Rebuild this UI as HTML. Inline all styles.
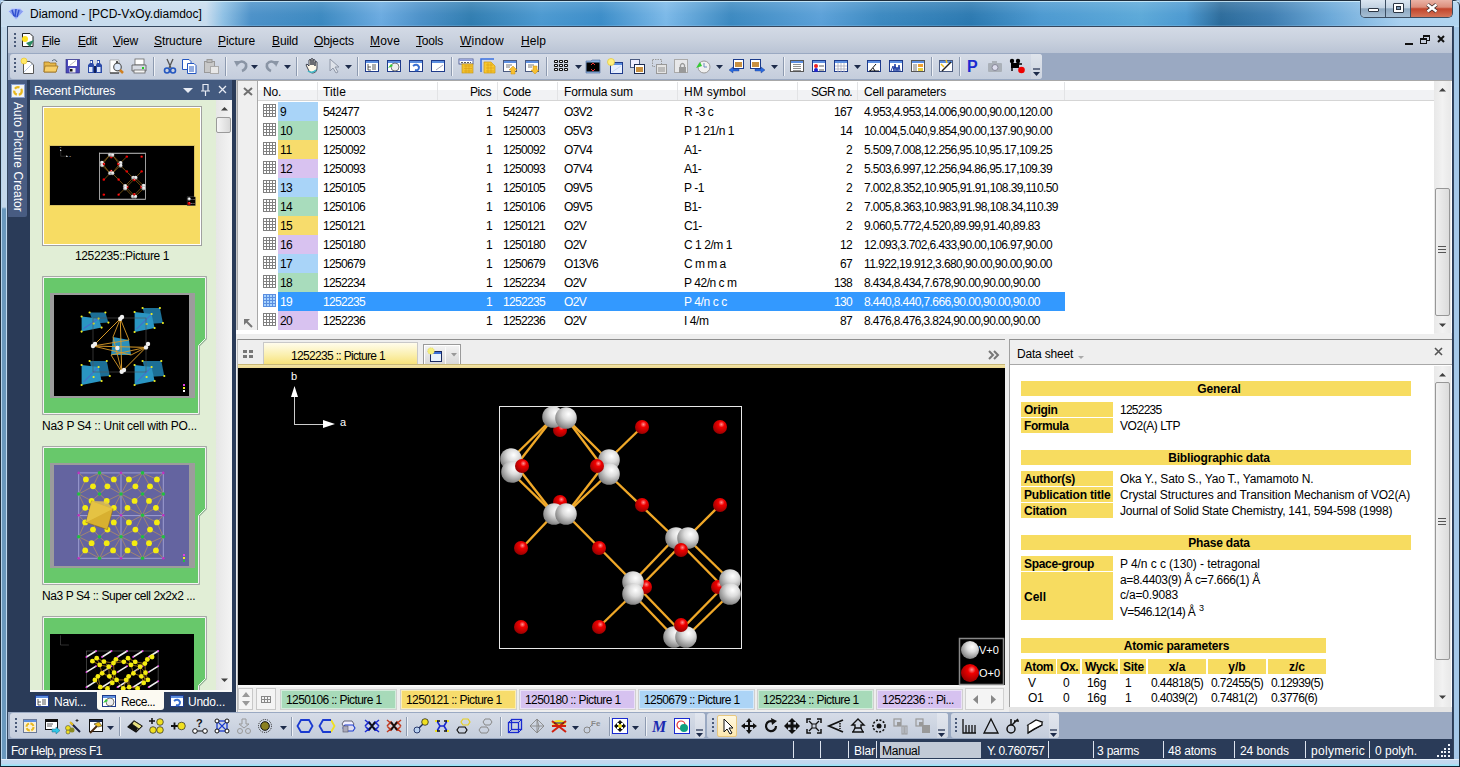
<!DOCTYPE html><html><head><meta charset="utf-8"><style>
*{box-sizing:border-box;margin:0;padding:0}
html,body{width:1460px;height:767px;overflow:hidden}
body{position:relative;font-family:"Liberation Sans", sans-serif;font-size:12px;color:#000;background:#a9c8e6}
.a{position:absolute}
.t{position:absolute;white-space:nowrap;line-height:1}
svg{overflow:visible}
</style></head><body>

<div class="a" style="left:0;top:0;width:1460px;height:767px;border:1px solid #1e2d3c;border-radius:6px 6px 0 0;
background:linear-gradient(90deg,#c8dcee 0px,#c8dcee 205px,#8ec0e4 222px,#4a90c8 250px,#3a88c0 320px,#6aaae0 380px,#4a90c8 420px,#2f7cb0 470px,#4a98d0 540px,#3a8cc8 600px,#7ab8e8 665px,#3a88c0 730px,#5aa0d8 820px,#3a88c0 880px,#2a78b0 970px,#4a98d0 1040px,#5aa8d8 1140px,#4a98d0 1185px,#2a6a9a 1220px,#3c7cb0 1270px,#6aa8d8 1330px,#a8d0f0 1400px,#b0d4f0 1460px)"></div>
<div class="a" style="left:1px;top:1px;width:1458px;height:26px;background:linear-gradient(180deg,rgba(220,245,255,.8) 0,rgba(220,245,255,.8) 1px,rgba(255,255,255,.15) 1px,rgba(255,255,255,.03) 50%,rgba(255,255,255,0) 92%,rgba(200,230,250,.6) 100%)"></div>
<div class="a" style="left:1px;top:27px;width:6px;height:733px;background:linear-gradient(180deg,#c4d8ea 0,#c4d8ea 180px,#6a98bd 182px,#6a98bd 100%);border-left:1px solid #b8d4ec;border-right:1px solid #c0d8f0"></div>
<div class="a" style="left:1453px;top:27px;width:6px;height:733px;background:#a5c8e8;border-left:1px solid #c8e0f8"></div>

<div class="t" style="left:30.0px;top:8px;font-size:12px;">Diamond - [PCD-VxOy.diamdoc]</div>
<svg class="a" style="left:8px;top:8px" width="16" height="12" viewBox="0 0 16 12"><path d="M0.5 3.5 L4 0.5 H12 L15.5 3.5 L8 11.5 Z" fill="#8aa0f0" stroke="#c8d4ff" stroke-width=".8"/><path d="M4 2L6 8M8 1L7 9M11 2L9 9" stroke="#3050d0" stroke-width="1.5" fill="none"/></svg>
<div class="a" style="left:1360px;top:0px;width:93px;height:18px;border:1px solid #3c4e62;border-top:none;border-radius:0 0 5px 5px;overflow:hidden;background:#9fb6cc">
<div class="a" style="left:0;top:0;width:25px;height:17px;background:linear-gradient(180deg,#dbe6f1 0,#c3d3e3 45%,#8ea8c0 52%,#a6bed4 100%);border-right:1px solid #3c4e62"></div>
<div class="a" style="left:25px;top:0;width:25px;height:17px;background:linear-gradient(180deg,#dbe6f1 0,#c3d3e3 45%,#8ea8c0 52%,#a6bed4 100%);border-right:1px solid #3c4e62"></div>
<div class="a" style="left:50px;top:0;width:42px;height:17px;background:linear-gradient(180deg,#eab3a6 0,#dc8e7c 42%,#c2452c 52%,#d4755a 100%)"></div>
<div class="a" style="left:7px;top:8px;width:11px;height:4px;background:#fff;border:1px solid #2a3442;border-radius:1px"></div>
<div class="a" style="left:32px;top:3px;width:11px;height:10px;border:1px solid #2a3442;background:#fff;border-radius:1px"></div>
<div class="a" style="left:35px;top:6px;width:5px;height:4px;background:#7d98b4;border:1px solid #2a3442"></div>
<svg class="a" style="left:65px;top:3px" width="12" height="10" viewBox="0 0 12 10"><path d="M1.5 1.5L10.5 8.5M10.5 1.5L1.5 8.5" stroke="#3a2a2a" stroke-width="4"/><path d="M1.5 1.5L10.5 8.5M10.5 1.5L1.5 8.5" stroke="#fff" stroke-width="2.4"/></svg>
</div>
<div class="a" style="left:7px;top:26px;width:1447px;height:734px;background:#2a3b58;border:1px solid #34465e;border-bottom:none"></div>
<div class="a" style="left:8px;top:27px;width:1444px;height:26px;background:linear-gradient(180deg,#d3dae6 0,#c9d1de 50%,#bac4d5 100%)"></div>
<div class="a" style="left:8px;top:53px;width:1444px;height:27px;background:#9aa9c2"></div>
<div class="a" style="left:10px;top:54px;width:1032px;height:25px;background:linear-gradient(180deg,#d6dce7,#c4cddc);border-radius:3px"></div>
<div class="a" style="left:1031px;top:54px;width:11px;height:25px;background:linear-gradient(180deg,#dfe4ec,#cdd4e0);border-radius:0 3px 3px 0"></div>
<div class="a" style="left:14px;top:33px;width:2px;height:2px;background:#4a5a78"></div><div class="a" style="left:14px;top:37px;width:2px;height:2px;background:#4a5a78"></div><div class="a" style="left:14px;top:41px;width:2px;height:2px;background:#4a5a78"></div><div class="a" style="left:14px;top:45px;width:2px;height:2px;background:#4a5a78"></div>
<svg class="a" style="left:20px;top:32px" width="16" height="16" viewBox="0 0 16 16"><path d="M2.5 1.5H10L13 4.5V14.5H2.5Z" fill="#fff" stroke="#222"/><circle cx="5" cy="7" r="3" fill="#ffe020"/><path d="M6 11L14 8L10 15Z" fill="#2a8a60"/></svg>
<div class="t" style="left:42.0px;top:35px;font-size:12px;letter-spacing:-0.33px;"><u style="text-underline-offset:1px">F</u>ile</div>
<div class="t" style="left:78.0px;top:35px;font-size:12px;letter-spacing:-0.42px;"><u style="text-underline-offset:1px">E</u>dit</div>
<div class="t" style="left:113.0px;top:35px;font-size:12px;letter-spacing:-0.20px;"><u style="text-underline-offset:1px">V</u>iew</div>
<div class="t" style="left:154.0px;top:35px;font-size:12px;letter-spacing:-0.08px;"><u style="text-underline-offset:1px">S</u>tructure</div>
<div class="t" style="left:218.0px;top:35px;font-size:12px;letter-spacing:-0.05px;"><u style="text-underline-offset:1px">P</u>icture</div>
<div class="t" style="left:272.0px;top:35px;font-size:12px;letter-spacing:-0.14px;"><u style="text-underline-offset:1px">B</u>uild</div>
<div class="t" style="left:314.0px;top:35px;font-size:12px;letter-spacing:-0.10px;"><u style="text-underline-offset:1px">O</u>bjects</div>
<div class="t" style="left:370.0px;top:35px;font-size:12px;letter-spacing:0.16px;"><u style="text-underline-offset:1px">M</u>ove</div>
<div class="t" style="left:416.0px;top:35px;font-size:12px;letter-spacing:-0.20px;"><u style="text-underline-offset:1px">T</u>ools</div>
<div class="t" style="left:460.0px;top:35px;font-size:12px;letter-spacing:0.22px;"><u style="text-underline-offset:1px">W</u>indow</div>
<div class="t" style="left:521.0px;top:35px;font-size:12px;letter-spacing:0.08px;"><u style="text-underline-offset:1px">H</u>elp</div>
<div class="a" style="left:1405px;top:43px;width:8px;height:2px;background:#111"></div>
<div class="a" style="left:1423px;top:35px;width:7px;height:6px;border:1px solid #111;border-top-width:2px"></div><div class="a" style="left:1420px;top:38px;width:7px;height:6px;border:1px solid #111;border-top-width:2px;background:#c6cedc"></div>
<svg class="a" style="left:1437px;top:35px" width="8" height="8" viewBox="0 0 8 8"><path d="M1 1L7 7M7 1L1 7" stroke="#111" stroke-width="2"/></svg>
<div class="a" style="left:14px;top:58px;width:2px;height:2px;background:#4a5a78"></div><div class="a" style="left:14px;top:62px;width:2px;height:2px;background:#4a5a78"></div><div class="a" style="left:14px;top:66px;width:2px;height:2px;background:#4a5a78"></div><div class="a" style="left:14px;top:70px;width:2px;height:2px;background:#4a5a78"></div>
<svg class="a" style="left:20px;top:58px" width="16" height="16" viewBox="0 0 16 16"><path d="M3.5 3.5H10L13.5 7V15.5H3.5Z" fill="#fff" stroke="#555"/><path d="M4 14L12 6" stroke="#b8c8e0"/><circle cx="4" cy="3" r="3" fill="#ffe866" stroke="#e8c020" stroke-width=".6"/></svg>
<svg class="a" style="left:43px;top:58px" width="16" height="16" viewBox="0 0 16 16"><path d="M1 4H6L7 5H13V14H1Z" fill="#e6b84a" stroke="#9a7020" stroke-width=".8"/><path d="M2 8H15L13 14H1Z" fill="#f7cf6a" stroke="#9a7020" stroke-width=".8"/><path d="M9 3Q12 0 14 4" stroke="#567" fill="none" stroke-width="1"/></svg>
<svg class="a" style="left:65px;top:58px" width="16" height="16" viewBox="0 0 16 16"><rect x="1" y="1.5" width="13.5" height="13.5" fill="#4a48b8" stroke="#2a2a80" stroke-width=".6"/><rect x="3" y="2" width="9" height="6" fill="#fff"/><path d="M4.5 7.5L11 2.5" stroke="#aaa" stroke-width=".8"/><rect x="4.5" y="10" width="6" height="4.5" fill="#eee"/><rect x="5" y="11" width="2.5" height="2.5" fill="#111"/></svg>
<svg class="a" style="left:87px;top:58px" width="16" height="16" viewBox="0 0 16 16"><path d="M3 2H6V5L7 7V15H1V7L3 5Z" fill="#2a4aa8"/><path d="M10 2H13V5L15 7V15H9V7L10 5Z" fill="#2a4aa8"/><rect x="2" y="9" width="3.5" height="5" fill="#dde6f8"/><rect x="10" y="9" width="3.5" height="5" fill="#dde6f8"/><rect x="3.5" y="3" width="1.5" height="2" fill="#fff"/><rect x="10.5" y="3" width="1.5" height="2" fill="#fff"/><rect x="7" y="8" width="2" height="7" fill="#10205a"/></svg>
<svg class="a" style="left:109px;top:58px" width="16" height="16" viewBox="0 0 16 16"><path d="M1 2H10V15H1Z" fill="#fff" stroke="#8a8a8a" stroke-width=".6"/><path d="M1 15H10" stroke="#333" stroke-width="1.2"/><circle cx="8.5" cy="9" r="3.8" fill="#dde8f8" stroke="#555" stroke-width="1.2"/><path d="M8 3V5" stroke="#222" stroke-width="1.5"/><path d="M11 12L14 15" stroke="#d08020" stroke-width="2.5"/></svg>
<svg class="a" style="left:131px;top:58px" width="16" height="16" viewBox="0 0 16 16"><rect x="4" y="1" width="9" height="6" fill="#fff" stroke="#666" stroke-width=".8"/><path d="M1 7H15V13H1Z" fill="#d8dce4" stroke="#555" stroke-width=".8"/><rect x="3" y="12" width="11" height="3" fill="#f4f4f4" stroke="#666" stroke-width=".8"/><rect x="11" y="9" width="2" height="2" fill="#2c2"/></svg>
<svg class="a" style="left:162px;top:58px" width="16" height="16" viewBox="0 0 16 16"><path d="M5 1L9 10M11 1L7 10" stroke="#555" stroke-width="1.3"/><circle cx="5" cy="12.5" r="2.5" fill="none" stroke="#2356c0" stroke-width="1.6"/><circle cx="11" cy="12.5" r="2.5" fill="none" stroke="#2356c0" stroke-width="1.6"/></svg>
<svg class="a" style="left:181px;top:58px" width="16" height="16" viewBox="0 0 16 16"><path d="M1.5 1.5H8L10 3.5V11.5H1.5Z" fill="#fff" stroke="#2356c0"/><path d="M6.5 5.5H13L15 7.5V15.5H6.5Z" fill="#fff" stroke="#2356c0"/><path d="M8 9H13M8 11H13M8 13H13" stroke="#2356c0"/></svg>
<svg class="a" style="left:203px;top:58px" width="16" height="16" viewBox="0 0 16 16"><rect x="1.5" y="3.5" width="10" height="11" fill="#c8c8c8" stroke="#999"/><rect x="4" y="1.5" width="5" height="3" fill="#bbb" stroke="#999"/><rect x="7.5" y="8.5" width="8" height="7" fill="#e8e8e8" stroke="#aaa"/></svg>
<svg class="a" style="left:233px;top:58px" width="16" height="16" viewBox="0 0 16 16"><path d="M4 6Q9 1 13 6Q14 11 9 13" stroke="#8a95a5" stroke-width="2.6" fill="none"/><path d="M1 3L6 3L4 9Z" fill="#8a95a5"/></svg>
<svg class="a" style="left:264px;top:58px" width="16" height="16" viewBox="0 0 16 16"><path d="M12 6Q7 1 3 6Q2 11 7 13" stroke="#8a95a5" stroke-width="2.6" fill="none"/><path d="M15 3L10 3L12 9Z" fill="#8a95a5"/></svg>
<svg class="a" style="left:304px;top:58px" width="16" height="16" viewBox="0 0 16 16"><path d="M3 9Q1 6 3 6L5 8V2Q6 1 7 2V7V1Q8 0 9 1V7V2Q10 1 11 2V8V4Q12 3 13 4V10Q13 15 8 15Q5 15 3 9Z" fill="#fff8e8" stroke="#2a3040" stroke-width=".9"/><path d="M4 13Q8 16 12 12" stroke="#3cb8c8" stroke-width="1.5" fill="none"/></svg>
<svg class="a" style="left:326px;top:58px" width="16" height="16" viewBox="0 0 16 16"><path d="M4 1V13L7 10L10 15L12 14L9 9H13Z" fill="#dfe3ea" stroke="#9098a8"/></svg>
<svg class="a" style="left:364px;top:58px" width="16" height="16" viewBox="0 0 16 16"><rect x="1.5" y="2.5" width="13" height="11" fill="#fff" stroke="#1e3a8a"/><rect x="2" y="3" width="12" height="2" fill="#5d8fe0"/><path d="M4 6V12H7M4 9H7M8 7H12M8 9H12M8 11H12" stroke="#333" stroke-width=".8" fill="none"/></svg>
<svg class="a" style="left:386px;top:58px" width="16" height="16" viewBox="0 0 16 16"><rect x="1.5" y="2.5" width="13" height="11" fill="#fff" stroke="#1e3a8a"/><rect x="2" y="3" width="12" height="2" fill="#5d8fe0"/><circle cx="9" cy="9" r="4" fill="#eee" stroke="#777"/><path d="M2 10L5 6L7 8Z" fill="#3c3"/></svg>
<svg class="a" style="left:408px;top:58px" width="16" height="16" viewBox="0 0 16 16"><rect x="1.5" y="2.5" width="13" height="11" fill="#fff" stroke="#1e3a8a"/><rect x="2" y="3" width="12" height="2" fill="#5d8fe0"/><path d="M5 8Q9 5 11 9Q11 13 7 12" stroke="#3a6fd0" stroke-width="2" fill="none"/></svg>
<svg class="a" style="left:430px;top:58px" width="16" height="16" viewBox="0 0 16 16"><rect x="1.5" y="2.5" width="13" height="11" fill="#fff" stroke="#1e3a8a"/><rect x="2" y="3" width="12" height="2" fill="#5d8fe0"/><path d="M6 12L13 7" stroke="#aab"/></svg>
<svg class="a" style="left:458px;top:58px" width="16" height="16" viewBox="0 0 16 16"><rect x="1" y="1" width="14" height="5" fill="#fff" stroke="#3a4a8a" stroke-width=".8"/><rect x="1.4" y="1.4" width="13.2" height="1.6" fill="#8a9ae0"/><path d="M3 4.5H13" stroke="#333" stroke-width=".8" stroke-dasharray="2 1"/><rect x="4" y="6" width="11" height="9" fill="#f2c232" stroke="#c09010" stroke-width=".6"/><path d="M6 8H14M6 10.5H14M6 13H14M8 7V15M11 7V15" stroke="#d8a010" stroke-width=".6"/></svg>
<svg class="a" style="left:480px;top:58px" width="16" height="16" viewBox="0 0 16 16"><path d="M1 14V1H14" stroke="#3a70e0" stroke-width="1.5" fill="none"/><path d="M4 4H11L15 8V15H4Z" fill="#f8c830" stroke="#d09a10" stroke-width=".7"/><path d="M6 7H13M6 10H14M6 13H14M8 5V15M11 5V15" stroke="#d8a010" stroke-width=".6"/></svg>
<svg class="a" style="left:502px;top:58px" width="16" height="16" viewBox="0 0 16 16"><rect x="1.5" y="2.5" width="13" height="11" fill="#fff" stroke="#4a5a80"/><rect x="2" y="3" width="12" height="2" fill="#5d8fe0"/><path d="M4 7H10M4 9H8" stroke="#555" stroke-width=".8"/><path d="M11 8L15 12H13V16H9V12H7Z" fill="#f8c030" stroke="#c89010" stroke-width=".5"/></svg>
<svg class="a" style="left:524px;top:58px" width="16" height="16" viewBox="0 0 16 16"><rect x="1.5" y="2.5" width="13" height="11" fill="#fff" stroke="#4a5a80"/><rect x="2" y="3" width="12" height="2" fill="#5d8fe0"/><path d="M4 7H10M4 9H8" stroke="#555" stroke-width=".8"/><path d="M11 16L15 12H13V8H9V12H7Z" fill="#f8c030" stroke="#c89010" stroke-width=".5"/></svg>
<svg class="a" style="left:553px;top:58px" width="16" height="16" viewBox="0 0 16 16"><rect x="1.5" y="2.5" width="3" height="2" rx=".5" fill="#fff" stroke="#111" stroke-width="1.1"/><rect x="1.5" y="6.5" width="3" height="2" rx=".5" fill="#fff" stroke="#111" stroke-width="1.1"/><rect x="1.5" y="10.5" width="3" height="2" rx=".5" fill="#fff" stroke="#111" stroke-width="1.1"/><rect x="6.5" y="2.5" width="3" height="2" rx=".5" fill="#fff" stroke="#111" stroke-width="1.1"/><rect x="6.5" y="6.5" width="3" height="2" rx=".5" fill="#fff" stroke="#111" stroke-width="1.1"/><rect x="6.5" y="10.5" width="3" height="2" rx=".5" fill="#fff" stroke="#111" stroke-width="1.1"/><rect x="11.5" y="2.5" width="3" height="2" rx=".5" fill="#fff" stroke="#111" stroke-width="1.1"/><rect x="11.5" y="6.5" width="3" height="2" rx=".5" fill="#fff" stroke="#111" stroke-width="1.1"/><rect x="11.5" y="10.5" width="3" height="2" rx=".5" fill="#fff" stroke="#111" stroke-width="1.1"/></svg>
<svg class="a" style="left:585px;top:58px" width="16" height="16" viewBox="0 0 16 16"><path d="M1 3H6L7 2H15V15H1Z" fill="#8ab0e0" stroke="#4a6a9a" stroke-width=".6"/><rect x="1.5" y="4.5" width="13" height="9" fill="#000"/><path d="M6 7L8 5L10 7M6 11L8 13L10 11" stroke="#e33" fill="none"/></svg>
<svg class="a" style="left:607px;top:58px" width="16" height="16" viewBox="0 0 16 16"><rect x="3.5" y="4.5" width="12" height="11" fill="#e8f0ff" stroke="#1e3a8a"/><rect x="4" y="5" width="11" height="2" fill="#5d8fe0"/><path d="M5 14L14 8" stroke="#c8d8f0"/><circle cx="4" cy="4" r="3.5" fill="#fff080" stroke="#e0c020" stroke-width=".6"/></svg>
<svg class="a" style="left:629px;top:58px" width="16" height="16" viewBox="0 0 16 16"><rect x="1.5" y="1.5" width="9" height="8" fill="#eef" stroke="#4a5a80"/><rect x="5.5" y="6.5" width="10" height="9" fill="#fff" stroke="#1a2a50"/><rect x="7" y="9" width="7" height="5" fill="#c89040"/></svg>
<svg class="a" style="left:651px;top:58px" width="16" height="16" viewBox="0 0 16 16"><rect x="1.5" y="1.5" width="9" height="7" fill="none" stroke="#999" stroke-dasharray="1.5 1"/><rect x="5.5" y="6.5" width="10" height="9" fill="#e4e4e4" stroke="#999"/><rect x="7" y="9" width="7" height="5" fill="#bbb"/></svg>
<svg class="a" style="left:673px;top:58px" width="16" height="16" viewBox="0 0 16 16"><rect x="1.5" y="1.5" width="13" height="13" fill="#e8e8ea" stroke="#aaa"/><rect x="6" y="9" width="7" height="6" fill="#999"/><path d="M7.5 9V7Q9.5 4 11.5 7V9" stroke="#999" stroke-width="1.3" fill="none"/></svg>
<svg class="a" style="left:695px;top:58px" width="16" height="16" viewBox="0 0 16 16"><circle cx="9" cy="9" r="6" fill="#f0f0f0" stroke="#999"/><path d="M9 5V9H12" stroke="#6a8ac0" fill="none"/><path d="M1 10L5 4L7 8Z" fill="#3c3"/></svg>
<svg class="a" style="left:728px;top:58px" width="16" height="16" viewBox="0 0 16 16"><rect x="5.5" y="1.5" width="10" height="9" fill="#fff" stroke="#1a3a8a"/><rect x="7" y="4" width="7" height="5" fill="#c89040"/><path d="M1 12L5 9V11H11V13H5V15Z" fill="#2a6ae0" stroke="#1a3a8a" stroke-width=".4"/></svg>
<svg class="a" style="left:750px;top:58px" width="16" height="16" viewBox="0 0 16 16"><rect x="0.5" y="1.5" width="10" height="9" fill="#fff" stroke="#1a3a8a"/><rect x="2" y="4" width="7" height="5" fill="#c89040"/><path d="M15 12L11 9V11H5V13H11V15Z" fill="#2a6ae0" stroke="#1a3a8a" stroke-width=".4"/></svg>
<svg class="a" style="left:789px;top:58px" width="16" height="16" viewBox="0 0 16 16"><rect x="1.5" y="2.5" width="13" height="11" fill="#fff" stroke="#555"/><rect x="2" y="3" width="12" height="2" fill="#5d8fe0"/><path d="M4 6.5H12M4 8.5H12M4 10.5H12M4 12.5H12" stroke="#444" stroke-width=".6"/></svg>
<svg class="a" style="left:811px;top:58px" width="16" height="16" viewBox="0 0 16 16"><rect x="1.5" y="2.5" width="13" height="11" fill="#fff" stroke="#1e3a8a"/><rect x="2" y="3" width="12" height="2" fill="#5d8fe0"/><circle cx="5" cy="8" r="2" fill="#e22"/><circle cx="5" cy="12" r="2" fill="#22c"/><path d="M8 8H13M8 12H13" stroke="#333" stroke-width=".8"/></svg>
<svg class="a" style="left:833px;top:58px" width="16" height="16" viewBox="0 0 16 16"><rect x="1.5" y="2.5" width="13" height="11" fill="#fff" stroke="#1e3a8a"/><rect x="2" y="3" width="12" height="2" fill="#5d8fe0"/><path d="M2 8H14M2 11H14M5 5V14M8 5V14M11 5V14" stroke="#aab" stroke-width=".8"/></svg>
<svg class="a" style="left:866px;top:58px" width="16" height="16" viewBox="0 0 16 16"><rect x="1.5" y="2.5" width="13" height="11" fill="#fff" stroke="#1e3a8a"/><rect x="2" y="3" width="12" height="2" fill="#5d8fe0"/><path d="M3 13H13M4 13L10 6M7 10L9 13" stroke="#111" fill="none"/></svg>
<svg class="a" style="left:888px;top:58px" width="16" height="16" viewBox="0 0 16 16"><rect x="1.5" y="2.5" width="13" height="11" fill="#fff" stroke="#1e3a8a"/><rect x="2" y="3" width="12" height="2" fill="#5d8fe0"/><path d="M3 13L5 8L6 13L7 6L8 13L9 9L10 13L11 7L12 13" stroke="#1a3aa0" fill="none"/></svg>
<svg class="a" style="left:910px;top:58px" width="16" height="16" viewBox="0 0 16 16"><rect x="1.5" y="2.5" width="13" height="11" fill="#fff" stroke="#555"/><rect x="2" y="3" width="12" height="2" fill="#5d8fe0"/><rect x="3" y="6" width="4" height="7" fill="#bbb"/><rect x="8" y="6" width="5" height="3" fill="#f0a030"/><rect x="8" y="10" width="5" height="3" fill="#e8d040"/></svg>
<svg class="a" style="left:938px;top:58px" width="16" height="16" viewBox="0 0 16 16"><rect x="1.5" y="2.5" width="13" height="11" fill="#fff" stroke="#4a5a80"/><rect x="2" y="3" width="12" height="2" fill="#5d8fe0"/><path d="M4 13L13 4" stroke="#222" stroke-width="1.5"/><path d="M3 6L6 9M8 2L9 5" stroke="#f0c020" stroke-width="1.5"/></svg>
<svg class="a" style="left:965px;top:58px" width="16" height="16" viewBox="0 0 16 16"><text x="2" y="14" font-family="Liberation Sans" font-weight="bold" font-size="16" fill="#1a2ad0">P</text></svg>
<svg class="a" style="left:987px;top:58px" width="16" height="16" viewBox="0 0 16 16"><rect x="1" y="5" width="14" height="9" rx="1" fill="#aab0b8"/><circle cx="8" cy="9.5" r="3" fill="#dde" stroke="#889"/><rect x="5" y="3" width="5" height="2" fill="#aab0b8"/></svg>
<svg class="a" style="left:1009px;top:58px" width="16" height="16" viewBox="0 0 16 16"><circle cx="3" cy="3" r="2.2" fill="#000"/><circle cx="9" cy="3" r="2.2" fill="#000"/><rect x="2" y="5" width="8" height="5" fill="#000"/><path d="M10 6H13M3 10V13" stroke="#000" stroke-width="1.5"/><circle cx="12.5" cy="12" r="3.3" fill="#e00"/></svg>
<div class="a" style="left:153px;top:57px;width:2px;height:19px;border-left:1px solid #8d9ab0;border-right:1px solid #eef1f6"></div>
<div class="a" style="left:225px;top:57px;width:2px;height:19px;border-left:1px solid #8d9ab0;border-right:1px solid #eef1f6"></div>
<div class="a" style="left:296px;top:57px;width:2px;height:19px;border-left:1px solid #8d9ab0;border-right:1px solid #eef1f6"></div>
<div class="a" style="left:357px;top:57px;width:2px;height:19px;border-left:1px solid #8d9ab0;border-right:1px solid #eef1f6"></div>
<div class="a" style="left:451px;top:57px;width:2px;height:19px;border-left:1px solid #8d9ab0;border-right:1px solid #eef1f6"></div>
<div class="a" style="left:546px;top:57px;width:2px;height:19px;border-left:1px solid #8d9ab0;border-right:1px solid #eef1f6"></div>
<div class="a" style="left:783px;top:57px;width:2px;height:19px;border-left:1px solid #8d9ab0;border-right:1px solid #eef1f6"></div>
<div class="a" style="left:931px;top:57px;width:2px;height:19px;border-left:1px solid #8d9ab0;border-right:1px solid #eef1f6"></div>
<div class="a" style="left:959px;top:57px;width:2px;height:19px;border-left:1px solid #8d9ab0;border-right:1px solid #eef1f6"></div>
<svg class="a" style="left:251px;top:65px" width="7" height="4" viewBox="0 0 7 4"><path d="M0 0H7L3.5 4Z" fill="#1d2b4a"/></svg>
<svg class="a" style="left:284px;top:65px" width="7" height="4" viewBox="0 0 7 4"><path d="M0 0H7L3.5 4Z" fill="#1d2b4a"/></svg>
<svg class="a" style="left:345px;top:65px" width="7" height="4" viewBox="0 0 7 4"><path d="M0 0H7L3.5 4Z" fill="#1d2b4a"/></svg>
<svg class="a" style="left:575px;top:65px" width="7" height="4" viewBox="0 0 7 4"><path d="M0 0H7L3.5 4Z" fill="#1d2b4a"/></svg>
<svg class="a" style="left:716px;top:65px" width="7" height="4" viewBox="0 0 7 4"><path d="M0 0H7L3.5 4Z" fill="#1d2b4a"/></svg>
<svg class="a" style="left:771px;top:65px" width="7" height="4" viewBox="0 0 7 4"><path d="M0 0H7L3.5 4Z" fill="#1d2b4a"/></svg>
<svg class="a" style="left:854px;top:65px" width="7" height="4" viewBox="0 0 7 4"><path d="M0 0H7L3.5 4Z" fill="#1d2b4a"/></svg>
<svg class="a" style="left:1032px;top:68px" width="9" height="9" viewBox="0 0 9 9"><path d="M1 1H8" stroke="#1d2b4a" stroke-width="1.2"/><path d="M1 4H8L4.5 8Z" fill="#1d2b4a"/></svg>
<div class="a" style="left:8px;top:80px;width:19px;height:137px;background:#485c82;border-radius:0 0 2px 0"></div>
<svg class="a" style="left:11px;top:84px" width="14" height="14" viewBox="0 0 14 14"><rect x="0.5" y="0.5" width="13" height="13" fill="#f4f4f0" stroke="#8aa0d0"/><circle cx="7" cy="7" r="3.8" fill="none" stroke="#e8b820" stroke-width="2.2" stroke-dasharray="5 2"/></svg>
<div class="t" style="left:12px;top:102px;font-size:12px;color:#fff;transform-origin:0 0;transform:translate(12px,0) rotate(90deg);letter-spacing:0.06px">Auto Picture Creator</div>
<div class="a" style="left:30px;top:80px;width:202px;height:20px;background:#435a7f"></div>
<div class="t" style="left:34.0px;top:85px;font-size:12px;color:#fff;letter-spacing:-0.25px;">Recent Pictures</div>
<svg class="a" style="left:183px;top:88px" width="10" height="5" viewBox="0 0 10 5"><path d="M0 0H10L5 5Z" fill="#e8ecf4"/></svg>
<svg class="a" style="left:201px;top:84px" width="10" height="12" viewBox="0 0 10 12"><path d="M2 0.5H7V7H2ZM0 7H9M4.5 7V12" stroke="#e8ecf4" stroke-width="1.2" fill="none"/></svg>
<svg class="a" style="left:218px;top:85px" width="9" height="9" viewBox="0 0 9 9"><path d="M1 1L8 8M8 1L1 8" stroke="#e8ecf4" stroke-width="1.3"/></svg>
<div class="a" style="left:30px;top:100px;width:186px;height:590px;background:#e1eed6"></div>
<div class="a" style="left:216px;top:100px;width:16px;height:590px;background:linear-gradient(90deg,#e6e6e6,#f4f4f4)"></div>
<svg class="a" style="left:220px;top:106px" width="9" height="5" viewBox="0 0 9 5"><path d="M1 4.5L4.5 1L8 4.5Z" fill="#404040"/></svg>
<div class="a" style="left:216px;top:117px;width:15px;height:16px;border:1px solid #9a9a9a;border-radius:2px;background:linear-gradient(90deg,#f6f6f6,#d8d8d8)"></div>
<svg class="a" style="left:220px;top:678px" width="9" height="5" viewBox="0 0 9 5"><path d="M1 0.5L4.5 4L8 0.5Z" fill="#404040"/></svg>
<div class="a" style="left:42px;top:106px;width:160px;height:140px;border:1px solid #a0a0a0;background:#f7dc63;box-shadow:inset 0 0 0 1px #fff"></div>
<div class="a" style="left:49px;top:145px;width:146px;height:61px;background:#000;border:1px solid #d8c060"></div>
<svg class="a" style="left:42px;top:276px" width="166" height="140" viewBox="0 0 166 140"><path d="M0.5 0.5H164.5V63L157.5 70V138.5H0.5Z" fill="#68c86b" stroke="#a8a8a8"/><path d="M1.5 1.5H163.5V62.5L156.5 69.5V137.5H1.5Z" fill="none" stroke="#f4f4f4"/></svg>
<div class="a" style="left:50px;top:293px;width:145px;height:105px;background:#9c9c9c"></div><div class="a" style="left:54px;top:295px;width:135px;height:101px;background:#000"></div>
<svg class="a" style="left:53px;top:294px" width="136" height="102" viewBox="0 0 136 102"><polygon points="36.6,18.5 52.4,18.5 55.4,28.6 40.6,29.6" fill="#1c6f96"/><polygon points="28.6,22.5 45.6,24.5 48.6,33.6 28.6,37.6" fill="#2a95c2"/><line x1="30.599999999999994" y1="34.60000000000002" x2="45.599999999999994" y2="24.5" stroke="#5060d0" stroke-width="1"/><circle cx="28.6" cy="22.5" r="1.1" fill="#f0f020"/><circle cx="36.6" cy="18.5" r="1.1" fill="#f0f020"/><circle cx="52.4" cy="18.5" r="1.1" fill="#f0f020"/><circle cx="45.6" cy="24.5" r="1.1" fill="#f0f020"/><circle cx="28.6" cy="37.6" r="1.1" fill="#f0f020"/><circle cx="48.6" cy="33.6" r="1.1" fill="#f0f020"/><circle cx="55.4" cy="28.6" r="1.1" fill="#f0f020"/><circle cx="40.6" cy="29.6" r="1.1" fill="#f0f020"/><polygon points="89.6,14.0 106.9,14.0 109.9,29.0 93.6,30.0" fill="#1c6f96"/><polygon points="81.6,18.0 98.6,20.0 101.6,34.0 81.6,38.0" fill="#2a95c2"/><line x1="83.6" y1="35" x2="98.6" y2="20" stroke="#5060d0" stroke-width="1"/><circle cx="81.6" cy="18.0" r="1.1" fill="#f0f020"/><circle cx="89.6" cy="14.0" r="1.1" fill="#f0f020"/><circle cx="106.9" cy="14.0" r="1.1" fill="#f0f020"/><circle cx="98.6" cy="20.0" r="1.1" fill="#f0f020"/><circle cx="81.6" cy="38.0" r="1.1" fill="#f0f020"/><circle cx="101.6" cy="34.0" r="1.1" fill="#f0f020"/><circle cx="109.9" cy="29.0" r="1.1" fill="#f0f020"/><circle cx="93.6" cy="30.0" r="1.1" fill="#f0f020"/><polygon points="36.6,67.0 53.8,67.0 56.8,82.0 40.6,83.0" fill="#1c6f96"/><polygon points="28.6,71.0 45.6,73.0 48.6,87.0 28.6,91.0" fill="#2a95c2"/><line x1="30.599999999999994" y1="88" x2="45.599999999999994" y2="73" stroke="#5060d0" stroke-width="1"/><circle cx="28.6" cy="71.0" r="1.1" fill="#f0f020"/><circle cx="36.6" cy="67.0" r="1.1" fill="#f0f020"/><circle cx="53.8" cy="67.0" r="1.1" fill="#f0f020"/><circle cx="45.6" cy="73.0" r="1.1" fill="#f0f020"/><circle cx="28.6" cy="91.0" r="1.1" fill="#f0f020"/><circle cx="48.6" cy="87.0" r="1.1" fill="#f0f020"/><circle cx="56.8" cy="82.0" r="1.1" fill="#f0f020"/><circle cx="40.6" cy="83.0" r="1.1" fill="#f0f020"/><polygon points="89.6,67.0 108.3,67.0 111.3,82.0 93.6,83.0" fill="#1c6f96"/><polygon points="81.6,71.0 98.6,73.0 101.6,87.0 81.6,91.0" fill="#2a95c2"/><line x1="83.6" y1="88" x2="98.6" y2="73" stroke="#5060d0" stroke-width="1"/><circle cx="81.6" cy="71.0" r="1.1" fill="#f0f020"/><circle cx="89.6" cy="67.0" r="1.1" fill="#f0f020"/><circle cx="108.3" cy="67.0" r="1.1" fill="#f0f020"/><circle cx="98.6" cy="73.0" r="1.1" fill="#f0f020"/><circle cx="81.6" cy="91.0" r="1.1" fill="#f0f020"/><circle cx="101.6" cy="87.0" r="1.1" fill="#f0f020"/><circle cx="111.3" cy="82.0" r="1.1" fill="#f0f020"/><circle cx="93.6" cy="83.0" r="1.1" fill="#f0f020"/><polygon points="60.0,43.0 76.0,46.0 78.0,61.0 58.0,61.0" fill="#2a90bc"/><line x1="67.3" y1="24.69999999999999" x2="40" y2="52" stroke="#d89a28" stroke-width="1"/><line x1="40" y1="52" x2="93" y2="53.39999999999998" stroke="#d89a28" stroke-width="1"/><line x1="93" y1="53.39999999999998" x2="68.7" y2="77.80000000000001" stroke="#d89a28" stroke-width="1"/><line x1="68.7" y1="77.80000000000001" x2="67.3" y2="24.69999999999999" stroke="#d89a28" stroke-width="1"/><line x1="67.3" y1="24.69999999999999" x2="60" y2="43" stroke="#d89a28" stroke-width=".9"/><line x1="67.3" y1="24.69999999999999" x2="76" y2="46" stroke="#d89a28" stroke-width=".9"/><line x1="40" y1="52" x2="76" y2="46" stroke="#d89a28" stroke-width=".9"/><line x1="40" y1="52" x2="78" y2="61" stroke="#d89a28" stroke-width=".9"/><line x1="93" y1="53.39999999999998" x2="78" y2="61" stroke="#d89a28" stroke-width=".9"/><line x1="93" y1="53.39999999999998" x2="58" y2="61" stroke="#d89a28" stroke-width=".9"/><line x1="68.7" y1="77.80000000000001" x2="58" y2="61" stroke="#d89a28" stroke-width=".9"/><line x1="68.7" y1="77.80000000000001" x2="60" y2="43" stroke="#d89a28" stroke-width=".9"/><rect x="40" y="24" width="53" height="54" fill="none" stroke="#555" stroke-width=".6"/><circle cx="67.3" cy="24.69999999999999" r="2.2" fill="#f0f0f0"/><circle cx="40" cy="52" r="2.2" fill="#f0f0f0"/><circle cx="93" cy="53.39999999999998" r="2.2" fill="#f0f0f0"/><circle cx="68.7" cy="77.80000000000001" r="2.2" fill="#f0f0f0"/><circle cx="64.4" cy="54" r="2.2" fill="#f0f0f0"/><circle cx="69" cy="23" r="2.2" fill="#f0f0f0"/><circle cx="42" cy="50" r="2.2" fill="#f0f0f0"/><circle cx="95" cy="50" r="2.2" fill="#f0f0f0"/><circle cx="71" cy="76" r="2.2" fill="#f0f0f0"/><rect x="130" y="90" width="2" height="2" fill="#e040e0"/><rect x="130" y="93" width="2" height="2" fill="#f0f020"/><rect x="130" y="96" width="2" height="2" fill="#fff"/></svg>
<svg class="a" style="left:42px;top:446px" width="166" height="140" viewBox="0 0 166 140"><path d="M0.5 0.5H164.5V63L157.5 70V138.5H0.5Z" fill="#68c86b" stroke="#a8a8a8"/><path d="M1.5 1.5H163.5V62.5L156.5 69.5V137.5H1.5Z" fill="none" stroke="#f4f4f4"/></svg>
<div class="a" style="left:50px;top:463px;width:145px;height:105px;background:#9c9c9c"></div><div class="a" style="left:54px;top:465px;width:135px;height:101px;background:#6464a0"></div>
<svg class="a" style="left:53px;top:464px" width="136" height="102" viewBox="0 0 136 102"><line x1="46.5" y1="8.9" x2="32.9" y2="15.4" stroke="#c89a50" stroke-width=".6"/><line x1="46.5" y1="8.9" x2="60.8" y2="15.4" stroke="#c89a50" stroke-width=".6"/><line x1="46.5" y1="8.9" x2="40.0" y2="22.3" stroke="#c89a50" stroke-width=".6"/><line x1="46.5" y1="8.9" x2="54.4" y2="22.3" stroke="#c89a50" stroke-width=".6"/><line x1="89.5" y1="8.9" x2="75.9" y2="15.4" stroke="#c89a50" stroke-width=".6"/><line x1="89.5" y1="8.9" x2="103.9" y2="15.4" stroke="#c89a50" stroke-width=".6"/><line x1="89.5" y1="8.9" x2="82.4" y2="22.3" stroke="#c89a50" stroke-width=".6"/><line x1="89.5" y1="8.9" x2="97.0" y2="22.3" stroke="#c89a50" stroke-width=".6"/><line x1="25.7" y1="30.0" x2="32.9" y2="15.4" stroke="#c89a50" stroke-width=".6"/><line x1="25.7" y1="30.0" x2="40.0" y2="22.3" stroke="#c89a50" stroke-width=".6"/><line x1="25.7" y1="30.0" x2="38.6" y2="36.9" stroke="#c89a50" stroke-width=".6"/><line x1="25.7" y1="30.0" x2="32.2" y2="43.8" stroke="#c89a50" stroke-width=".6"/><line x1="46.5" y1="30.0" x2="40.0" y2="22.3" stroke="#c89a50" stroke-width=".6"/><line x1="46.5" y1="30.0" x2="54.4" y2="22.3" stroke="#c89a50" stroke-width=".6"/><line x1="46.5" y1="30.0" x2="38.6" y2="36.9" stroke="#c89a50" stroke-width=".6"/><line x1="46.5" y1="30.0" x2="53.7" y2="36.9" stroke="#c89a50" stroke-width=".6"/><line x1="68.0" y1="30.0" x2="60.8" y2="15.4" stroke="#c89a50" stroke-width=".6"/><line x1="68.0" y1="30.0" x2="75.9" y2="15.4" stroke="#c89a50" stroke-width=".6"/><line x1="68.0" y1="30.0" x2="54.4" y2="22.3" stroke="#c89a50" stroke-width=".6"/><line x1="68.0" y1="30.0" x2="82.4" y2="22.3" stroke="#c89a50" stroke-width=".6"/><line x1="68.0" y1="30.0" x2="53.7" y2="36.9" stroke="#c89a50" stroke-width=".6"/><line x1="68.0" y1="30.0" x2="81.6" y2="36.9" stroke="#c89a50" stroke-width=".6"/><line x1="68.0" y1="30.0" x2="60.8" y2="43.8" stroke="#c89a50" stroke-width=".6"/><line x1="68.0" y1="30.0" x2="74.5" y2="43.8" stroke="#c89a50" stroke-width=".6"/><line x1="89.5" y1="30.0" x2="82.4" y2="22.3" stroke="#c89a50" stroke-width=".6"/><line x1="89.5" y1="30.0" x2="97.0" y2="22.3" stroke="#c89a50" stroke-width=".6"/><line x1="89.5" y1="30.0" x2="81.6" y2="36.9" stroke="#c89a50" stroke-width=".6"/><line x1="89.5" y1="30.0" x2="96.0" y2="36.9" stroke="#c89a50" stroke-width=".6"/><line x1="110.3" y1="30.0" x2="103.9" y2="15.4" stroke="#c89a50" stroke-width=".6"/><line x1="110.3" y1="30.0" x2="97.0" y2="22.3" stroke="#c89a50" stroke-width=".6"/><line x1="110.3" y1="30.0" x2="96.0" y2="36.9" stroke="#c89a50" stroke-width=".6"/><line x1="110.3" y1="30.0" x2="102.9" y2="43.8" stroke="#c89a50" stroke-width=".6"/><line x1="46.5" y1="51.2" x2="38.6" y2="36.9" stroke="#c89a50" stroke-width=".6"/><line x1="46.5" y1="51.2" x2="53.7" y2="36.9" stroke="#c89a50" stroke-width=".6"/><line x1="46.5" y1="51.2" x2="32.2" y2="43.8" stroke="#c89a50" stroke-width=".6"/><line x1="46.5" y1="51.2" x2="60.8" y2="43.8" stroke="#c89a50" stroke-width=".6"/><line x1="46.5" y1="51.2" x2="32.2" y2="58.4" stroke="#c89a50" stroke-width=".6"/><line x1="46.5" y1="51.2" x2="60.8" y2="58.4" stroke="#c89a50" stroke-width=".6"/><line x1="46.5" y1="51.2" x2="40.0" y2="65.6" stroke="#c89a50" stroke-width=".6"/><line x1="46.5" y1="51.2" x2="54.4" y2="65.6" stroke="#c89a50" stroke-width=".6"/><line x1="89.5" y1="51.2" x2="81.6" y2="36.9" stroke="#c89a50" stroke-width=".6"/><line x1="89.5" y1="51.2" x2="96.0" y2="36.9" stroke="#c89a50" stroke-width=".6"/><line x1="89.5" y1="51.2" x2="74.5" y2="43.8" stroke="#c89a50" stroke-width=".6"/><line x1="89.5" y1="51.2" x2="102.9" y2="43.8" stroke="#c89a50" stroke-width=".6"/><line x1="89.5" y1="51.2" x2="75.9" y2="58.4" stroke="#c89a50" stroke-width=".6"/><line x1="89.5" y1="51.2" x2="103.9" y2="58.4" stroke="#c89a50" stroke-width=".6"/><line x1="89.5" y1="51.2" x2="82.4" y2="65.6" stroke="#c89a50" stroke-width=".6"/><line x1="89.5" y1="51.2" x2="97.0" y2="65.6" stroke="#c89a50" stroke-width=".6"/><line x1="25.7" y1="72.8" x2="32.2" y2="58.4" stroke="#c89a50" stroke-width=".6"/><line x1="25.7" y1="72.8" x2="40.0" y2="65.6" stroke="#c89a50" stroke-width=".6"/><line x1="25.7" y1="72.8" x2="38.6" y2="79.2" stroke="#c89a50" stroke-width=".6"/><line x1="25.7" y1="72.8" x2="32.2" y2="86.4" stroke="#c89a50" stroke-width=".6"/><line x1="46.5" y1="72.8" x2="40.0" y2="65.6" stroke="#c89a50" stroke-width=".6"/><line x1="46.5" y1="72.8" x2="54.4" y2="65.6" stroke="#c89a50" stroke-width=".6"/><line x1="46.5" y1="72.8" x2="38.6" y2="79.2" stroke="#c89a50" stroke-width=".6"/><line x1="46.5" y1="72.8" x2="53.7" y2="79.2" stroke="#c89a50" stroke-width=".6"/><line x1="68.0" y1="72.8" x2="60.8" y2="58.4" stroke="#c89a50" stroke-width=".6"/><line x1="68.0" y1="72.8" x2="75.9" y2="58.4" stroke="#c89a50" stroke-width=".6"/><line x1="68.0" y1="72.8" x2="54.4" y2="65.6" stroke="#c89a50" stroke-width=".6"/><line x1="68.0" y1="72.8" x2="82.4" y2="65.6" stroke="#c89a50" stroke-width=".6"/><line x1="68.0" y1="72.8" x2="53.7" y2="79.2" stroke="#c89a50" stroke-width=".6"/><line x1="68.0" y1="72.8" x2="81.6" y2="79.2" stroke="#c89a50" stroke-width=".6"/><line x1="68.0" y1="72.8" x2="60.1" y2="86.4" stroke="#c89a50" stroke-width=".6"/><line x1="68.0" y1="72.8" x2="74.5" y2="86.4" stroke="#c89a50" stroke-width=".6"/><line x1="89.5" y1="72.8" x2="82.4" y2="65.6" stroke="#c89a50" stroke-width=".6"/><line x1="89.5" y1="72.8" x2="97.0" y2="65.6" stroke="#c89a50" stroke-width=".6"/><line x1="89.5" y1="72.8" x2="81.6" y2="79.2" stroke="#c89a50" stroke-width=".6"/><line x1="89.5" y1="72.8" x2="96.0" y2="79.2" stroke="#c89a50" stroke-width=".6"/><line x1="110.3" y1="72.8" x2="103.9" y2="58.4" stroke="#c89a50" stroke-width=".6"/><line x1="110.3" y1="72.8" x2="97.0" y2="65.6" stroke="#c89a50" stroke-width=".6"/><line x1="110.3" y1="72.8" x2="96.0" y2="79.2" stroke="#c89a50" stroke-width=".6"/><line x1="110.3" y1="72.8" x2="102.9" y2="86.4" stroke="#c89a50" stroke-width=".6"/><line x1="46.5" y1="94.3" x2="38.6" y2="79.2" stroke="#c89a50" stroke-width=".6"/><line x1="46.5" y1="94.3" x2="53.7" y2="79.2" stroke="#c89a50" stroke-width=".6"/><line x1="46.5" y1="94.3" x2="32.2" y2="86.4" stroke="#c89a50" stroke-width=".6"/><line x1="46.5" y1="94.3" x2="60.1" y2="86.4" stroke="#c89a50" stroke-width=".6"/><line x1="89.5" y1="94.3" x2="81.6" y2="79.2" stroke="#c89a50" stroke-width=".6"/><line x1="89.5" y1="94.3" x2="96.0" y2="79.2" stroke="#c89a50" stroke-width=".6"/><line x1="89.5" y1="94.3" x2="74.5" y2="86.4" stroke="#c89a50" stroke-width=".6"/><line x1="89.5" y1="94.3" x2="102.9" y2="86.4" stroke="#c89a50" stroke-width=".6"/><line x1="25.7" y1="8.9" x2="32.9" y2="15.4" stroke="#c89a50" stroke-width=".6"/><line x1="68.0" y1="8.9" x2="60.8" y2="15.4" stroke="#c89a50" stroke-width=".6"/><line x1="68.0" y1="8.9" x2="75.9" y2="15.4" stroke="#c89a50" stroke-width=".6"/><line x1="110.3" y1="8.9" x2="103.9" y2="15.4" stroke="#c89a50" stroke-width=".6"/><line x1="25.7" y1="51.2" x2="32.2" y2="43.8" stroke="#c89a50" stroke-width=".6"/><line x1="25.7" y1="51.2" x2="32.2" y2="58.4" stroke="#c89a50" stroke-width=".6"/><line x1="68.0" y1="51.2" x2="60.8" y2="43.8" stroke="#c89a50" stroke-width=".6"/><line x1="68.0" y1="51.2" x2="74.5" y2="43.8" stroke="#c89a50" stroke-width=".6"/><line x1="68.0" y1="51.2" x2="60.8" y2="58.4" stroke="#c89a50" stroke-width=".6"/><line x1="68.0" y1="51.2" x2="75.9" y2="58.4" stroke="#c89a50" stroke-width=".6"/><line x1="110.3" y1="51.2" x2="102.9" y2="43.8" stroke="#c89a50" stroke-width=".6"/><line x1="110.3" y1="51.2" x2="103.9" y2="58.4" stroke="#c89a50" stroke-width=".6"/><line x1="25.7" y1="94.3" x2="32.2" y2="86.4" stroke="#c89a50" stroke-width=".6"/><line x1="68.0" y1="94.3" x2="60.1" y2="86.4" stroke="#c89a50" stroke-width=".6"/><line x1="68.0" y1="94.3" x2="74.5" y2="86.4" stroke="#c89a50" stroke-width=".6"/><line x1="110.3" y1="94.3" x2="102.9" y2="86.4" stroke="#c89a50" stroke-width=".6"/><line x1="25.7" y1="8.9" x2="25.7" y2="94.3" stroke="#b8b8e8" stroke-width=".7"/><line x1="68.0" y1="8.9" x2="68.0" y2="94.3" stroke="#b8b8e8" stroke-width=".7"/><line x1="110.3" y1="8.9" x2="110.3" y2="94.3" stroke="#b8b8e8" stroke-width=".7"/><line x1="25.7" y1="8.9" x2="110.3" y2="8.9" stroke="#b8b8e8" stroke-width=".7"/><line x1="25.7" y1="51.6" x2="110.3" y2="51.6" stroke="#b8b8e8" stroke-width=".7"/><line x1="25.7" y1="94.3" x2="110.3" y2="94.3" stroke="#b8b8e8" stroke-width=".7"/><circle cx="32.9" cy="15.4" r="2.9" fill="#f4ec10"/><circle cx="60.8" cy="15.4" r="2.9" fill="#f4ec10"/><circle cx="75.9" cy="15.4" r="2.9" fill="#f4ec10"/><circle cx="103.9" cy="15.4" r="2.9" fill="#f4ec10"/><circle cx="40.0" cy="22.3" r="2.9" fill="#f4ec10"/><circle cx="54.4" cy="22.3" r="2.9" fill="#f4ec10"/><circle cx="82.4" cy="22.3" r="2.9" fill="#f4ec10"/><circle cx="97.0" cy="22.3" r="2.9" fill="#f4ec10"/><circle cx="38.6" cy="36.9" r="2.9" fill="#f4ec10"/><circle cx="53.7" cy="36.9" r="2.9" fill="#f4ec10"/><circle cx="81.6" cy="36.9" r="2.9" fill="#f4ec10"/><circle cx="96.0" cy="36.9" r="2.9" fill="#f4ec10"/><circle cx="32.2" cy="43.8" r="2.9" fill="#f4ec10"/><circle cx="60.8" cy="43.8" r="2.9" fill="#f4ec10"/><circle cx="74.5" cy="43.8" r="2.9" fill="#f4ec10"/><circle cx="102.9" cy="43.8" r="2.9" fill="#f4ec10"/><circle cx="32.2" cy="58.4" r="2.9" fill="#f4ec10"/><circle cx="60.8" cy="58.4" r="2.9" fill="#f4ec10"/><circle cx="75.9" cy="58.4" r="2.9" fill="#f4ec10"/><circle cx="103.9" cy="58.4" r="2.9" fill="#f4ec10"/><circle cx="40.0" cy="65.6" r="2.9" fill="#f4ec10"/><circle cx="54.4" cy="65.6" r="2.9" fill="#f4ec10"/><circle cx="82.4" cy="65.6" r="2.9" fill="#f4ec10"/><circle cx="97.0" cy="65.6" r="2.9" fill="#f4ec10"/><circle cx="38.6" cy="79.2" r="2.9" fill="#f4ec10"/><circle cx="53.7" cy="79.2" r="2.9" fill="#f4ec10"/><circle cx="81.6" cy="79.2" r="2.9" fill="#f4ec10"/><circle cx="96.0" cy="79.2" r="2.9" fill="#f4ec10"/><circle cx="32.2" cy="86.4" r="2.9" fill="#f4ec10"/><circle cx="60.1" cy="86.4" r="2.9" fill="#f4ec10"/><circle cx="74.5" cy="86.4" r="2.9" fill="#f4ec10"/><circle cx="102.9" cy="86.4" r="2.9" fill="#f4ec10"/><circle cx="46.5" cy="8.9" r="1.8" fill="#20c040"/><circle cx="89.5" cy="8.9" r="1.8" fill="#20c040"/><circle cx="25.7" cy="30.0" r="1.8" fill="#20c040"/><circle cx="46.5" cy="30.0" r="1.8" fill="#20c040"/><circle cx="68.0" cy="30.0" r="1.8" fill="#20c040"/><circle cx="89.5" cy="30.0" r="1.8" fill="#20c040"/><circle cx="110.3" cy="30.0" r="1.8" fill="#20c040"/><circle cx="46.5" cy="51.2" r="1.8" fill="#20c040"/><circle cx="89.5" cy="51.2" r="1.8" fill="#20c040"/><circle cx="25.7" cy="72.8" r="1.8" fill="#20c040"/><circle cx="46.5" cy="72.8" r="1.8" fill="#20c040"/><circle cx="68.0" cy="72.8" r="1.8" fill="#20c040"/><circle cx="89.5" cy="72.8" r="1.8" fill="#20c040"/><circle cx="110.3" cy="72.8" r="1.8" fill="#20c040"/><circle cx="46.5" cy="94.3" r="1.8" fill="#20c040"/><circle cx="89.5" cy="94.3" r="1.8" fill="#20c040"/><circle cx="25.7" cy="8.9" r="1.3" fill="#c030c0"/><circle cx="68.0" cy="8.9" r="1.3" fill="#c030c0"/><circle cx="110.3" cy="8.9" r="1.3" fill="#c030c0"/><circle cx="25.7" cy="51.2" r="1.3" fill="#c030c0"/><circle cx="68.0" cy="51.2" r="1.3" fill="#c030c0"/><circle cx="110.3" cy="51.2" r="1.3" fill="#c030c0"/><circle cx="25.7" cy="94.3" r="1.3" fill="#c030c0"/><circle cx="68.0" cy="94.3" r="1.3" fill="#c030c0"/><circle cx="110.3" cy="94.3" r="1.3" fill="#c030c0"/><polygon points="38.6,36.9 60.1,44.8 54.4,65.6 32.9,58.4" fill="#d8b030" stroke="#806010" stroke-width=".5"/><polygon points="38.6,36.9 53.7,37.6 60.1,44.8 32.9,58.4" fill="#e8c848" opacity=".8"/><rect x="130" y="90" width="2" height="2" fill="#e040e0"/><rect x="130" y="93" width="2" height="2" fill="#f0f020"/><rect x="130" y="96" width="2" height="2" fill="#20c040"/></svg>
<div class="t" style="left:42px;top:616px;width:166px;height:74px;overflow:hidden"><svg width="166" height="140" viewBox="0 0 166 140" style="position:absolute;left:0;top:0"><path d="M0.5 0.5H164.5V63L157.5 70V139.5H0.5Z" fill="#68c86b" stroke="#a8a8a8"/><path d="M1.5 1.5H163.5V62.5L156.5 69.5V139.5H1.5Z" fill="none" stroke="#f4f4f4"/></svg><div class="a" style="left:8px;top:18px;width:144px;height:60px;background:#000"></div><svg class="a" style="left:0;top:0" width="166" height="74"><rect x="44.4" y="35.0" width="71.7" height="40" fill="none" stroke="#777" stroke-width=".5"/><line x1="44.4" y1="41.0" x2="54.1" y2="35.0" stroke="#f0f0f0" stroke-width="1.6"/><circle cx="44.4" cy="41.0" r=".9" fill="#e040e0"/><circle cx="54.1" cy="35.0" r=".9" fill="#e040e0"/><line x1="44.4" y1="56.1" x2="54.1" y2="50.1" stroke="#f0f0f0" stroke-width="1.6"/><circle cx="44.4" cy="56.1" r=".9" fill="#e040e0"/><circle cx="54.1" cy="50.1" r=".9" fill="#e040e0"/><line x1="44.4" y1="71.2" x2="54.1" y2="65.1" stroke="#f0f0f0" stroke-width="1.6"/><circle cx="44.4" cy="71.2" r=".9" fill="#e040e0"/><circle cx="54.1" cy="65.1" r=".9" fill="#e040e0"/><line x1="60.0" y1="41.0" x2="69.6" y2="35.0" stroke="#f0f0f0" stroke-width="1.6"/><circle cx="60.0" cy="41.0" r=".9" fill="#e040e0"/><circle cx="69.6" cy="35.0" r=".9" fill="#e040e0"/><line x1="60.0" y1="56.1" x2="69.6" y2="50.1" stroke="#f0f0f0" stroke-width="1.6"/><circle cx="60.0" cy="56.1" r=".9" fill="#e040e0"/><circle cx="69.6" cy="50.1" r=".9" fill="#e040e0"/><line x1="60.0" y1="71.2" x2="69.6" y2="65.1" stroke="#f0f0f0" stroke-width="1.6"/><circle cx="60.0" cy="71.2" r=".9" fill="#e040e0"/><circle cx="69.6" cy="65.1" r=".9" fill="#e040e0"/><line x1="75.5" y1="41.0" x2="85.2" y2="35.0" stroke="#f0f0f0" stroke-width="1.6"/><circle cx="75.5" cy="41.0" r=".9" fill="#e040e0"/><circle cx="85.2" cy="35.0" r=".9" fill="#e040e0"/><line x1="75.5" y1="56.1" x2="85.2" y2="50.1" stroke="#f0f0f0" stroke-width="1.6"/><circle cx="75.5" cy="56.1" r=".9" fill="#e040e0"/><circle cx="85.2" cy="50.1" r=".9" fill="#e040e0"/><line x1="75.5" y1="71.2" x2="85.2" y2="65.1" stroke="#f0f0f0" stroke-width="1.6"/><circle cx="75.5" cy="71.2" r=".9" fill="#e040e0"/><circle cx="85.2" cy="65.1" r=".9" fill="#e040e0"/><line x1="91.1" y1="41.0" x2="100.7" y2="35.0" stroke="#f0f0f0" stroke-width="1.6"/><circle cx="91.1" cy="41.0" r=".9" fill="#e040e0"/><circle cx="100.7" cy="35.0" r=".9" fill="#e040e0"/><line x1="91.1" y1="56.1" x2="100.7" y2="50.1" stroke="#f0f0f0" stroke-width="1.6"/><circle cx="91.1" cy="56.1" r=".9" fill="#e040e0"/><circle cx="100.7" cy="50.1" r=".9" fill="#e040e0"/><line x1="91.1" y1="71.2" x2="100.7" y2="65.1" stroke="#f0f0f0" stroke-width="1.6"/><circle cx="91.1" cy="71.2" r=".9" fill="#e040e0"/><circle cx="100.7" cy="65.1" r=".9" fill="#e040e0"/><line x1="106.6" y1="41.0" x2="116.3" y2="35.0" stroke="#f0f0f0" stroke-width="1.6"/><circle cx="106.6" cy="41.0" r=".9" fill="#e040e0"/><circle cx="116.3" cy="35.0" r=".9" fill="#e040e0"/><line x1="106.6" y1="56.1" x2="116.3" y2="50.1" stroke="#f0f0f0" stroke-width="1.6"/><circle cx="106.6" cy="56.1" r=".9" fill="#e040e0"/><circle cx="116.3" cy="50.1" r=".9" fill="#e040e0"/><line x1="106.6" y1="71.2" x2="116.3" y2="65.1" stroke="#f0f0f0" stroke-width="1.6"/><circle cx="106.6" cy="71.2" r=".9" fill="#e040e0"/><circle cx="116.3" cy="65.1" r=".9" fill="#e040e0"/><line x1="50.4" y1="45.2" x2="54.7" y2="42.2" stroke="#a87818" stroke-width=".5"/><line x1="50.4" y1="45.2" x2="57.7" y2="48.9" stroke="#a87818" stroke-width=".5"/><line x1="54.7" y1="42.2" x2="50.4" y2="45.2" stroke="#a87818" stroke-width=".5"/><line x1="54.7" y1="42.2" x2="61.9" y2="45.6" stroke="#a87818" stroke-width=".5"/><line x1="54.7" y1="42.2" x2="57.7" y2="48.9" stroke="#a87818" stroke-width=".5"/><line x1="61.9" y1="45.6" x2="54.7" y2="42.2" stroke="#a87818" stroke-width=".5"/><line x1="61.9" y1="45.6" x2="71.5" y2="47.0" stroke="#a87818" stroke-width=".5"/><line x1="61.9" y1="45.6" x2="57.7" y2="48.9" stroke="#a87818" stroke-width=".5"/><line x1="61.9" y1="45.6" x2="66.7" y2="50.7" stroke="#a87818" stroke-width=".5"/><line x1="71.5" y1="47.0" x2="61.9" y2="45.6" stroke="#a87818" stroke-width=".5"/><line x1="71.5" y1="47.0" x2="73.9" y2="43.4" stroke="#a87818" stroke-width=".5"/><line x1="71.5" y1="47.0" x2="81.8" y2="45.8" stroke="#a87818" stroke-width=".5"/><line x1="71.5" y1="47.0" x2="66.7" y2="50.7" stroke="#a87818" stroke-width=".5"/><line x1="71.5" y1="47.0" x2="72.1" y2="56.7" stroke="#a87818" stroke-width=".5"/><line x1="73.9" y1="43.4" x2="71.5" y2="47.0" stroke="#a87818" stroke-width=".5"/><line x1="73.9" y1="43.4" x2="81.8" y2="45.8" stroke="#a87818" stroke-width=".5"/><line x1="73.9" y1="43.4" x2="66.7" y2="50.7" stroke="#a87818" stroke-width=".5"/><line x1="81.8" y1="45.8" x2="71.5" y2="47.0" stroke="#a87818" stroke-width=".5"/><line x1="81.8" y1="45.8" x2="73.9" y2="43.4" stroke="#a87818" stroke-width=".5"/><line x1="81.8" y1="45.8" x2="86.0" y2="42.2" stroke="#a87818" stroke-width=".5"/><line x1="81.8" y1="45.8" x2="89.0" y2="48.9" stroke="#a87818" stroke-width=".5"/><line x1="86.0" y1="42.2" x2="81.8" y2="45.8" stroke="#a87818" stroke-width=".5"/><line x1="86.0" y1="42.2" x2="93.2" y2="45.8" stroke="#a87818" stroke-width=".5"/><line x1="86.0" y1="42.2" x2="89.0" y2="48.9" stroke="#a87818" stroke-width=".5"/><line x1="93.2" y1="45.8" x2="86.0" y2="42.2" stroke="#a87818" stroke-width=".5"/><line x1="93.2" y1="45.8" x2="102.9" y2="47.6" stroke="#a87818" stroke-width=".5"/><line x1="93.2" y1="45.8" x2="89.0" y2="48.9" stroke="#a87818" stroke-width=".5"/><line x1="93.2" y1="45.8" x2="98.1" y2="50.7" stroke="#a87818" stroke-width=".5"/><line x1="102.9" y1="47.6" x2="93.2" y2="45.8" stroke="#a87818" stroke-width=".5"/><line x1="102.9" y1="47.6" x2="105.3" y2="43.4" stroke="#a87818" stroke-width=".5"/><line x1="102.9" y1="47.6" x2="110.1" y2="41.0" stroke="#a87818" stroke-width=".5"/><line x1="102.9" y1="47.6" x2="98.1" y2="50.7" stroke="#a87818" stroke-width=".5"/><line x1="102.9" y1="47.6" x2="103.5" y2="56.7" stroke="#a87818" stroke-width=".5"/><line x1="105.3" y1="43.4" x2="102.9" y2="47.6" stroke="#a87818" stroke-width=".5"/><line x1="105.3" y1="43.4" x2="110.1" y2="41.0" stroke="#a87818" stroke-width=".5"/><line x1="105.3" y1="43.4" x2="98.1" y2="50.7" stroke="#a87818" stroke-width=".5"/><line x1="110.1" y1="41.0" x2="102.9" y2="47.6" stroke="#a87818" stroke-width=".5"/><line x1="110.1" y1="41.0" x2="105.3" y2="43.4" stroke="#a87818" stroke-width=".5"/><line x1="57.7" y1="48.9" x2="50.4" y2="45.2" stroke="#a87818" stroke-width=".5"/><line x1="57.7" y1="48.9" x2="54.7" y2="42.2" stroke="#a87818" stroke-width=".5"/><line x1="57.7" y1="48.9" x2="61.9" y2="45.6" stroke="#a87818" stroke-width=".5"/><line x1="57.7" y1="48.9" x2="66.7" y2="50.7" stroke="#a87818" stroke-width=".5"/><line x1="57.7" y1="48.9" x2="60.1" y2="57.3" stroke="#a87818" stroke-width=".5"/><line x1="66.7" y1="50.7" x2="61.9" y2="45.6" stroke="#a87818" stroke-width=".5"/><line x1="66.7" y1="50.7" x2="71.5" y2="47.0" stroke="#a87818" stroke-width=".5"/><line x1="66.7" y1="50.7" x2="73.9" y2="43.4" stroke="#a87818" stroke-width=".5"/><line x1="66.7" y1="50.7" x2="57.7" y2="48.9" stroke="#a87818" stroke-width=".5"/><line x1="66.7" y1="50.7" x2="60.1" y2="57.3" stroke="#a87818" stroke-width=".5"/><line x1="66.7" y1="50.7" x2="67.3" y2="60.3" stroke="#a87818" stroke-width=".5"/><line x1="66.7" y1="50.7" x2="72.1" y2="56.7" stroke="#a87818" stroke-width=".5"/><line x1="89.0" y1="48.9" x2="81.8" y2="45.8" stroke="#a87818" stroke-width=".5"/><line x1="89.0" y1="48.9" x2="86.0" y2="42.2" stroke="#a87818" stroke-width=".5"/><line x1="89.0" y1="48.9" x2="93.2" y2="45.8" stroke="#a87818" stroke-width=".5"/><line x1="89.0" y1="48.9" x2="98.1" y2="50.7" stroke="#a87818" stroke-width=".5"/><line x1="89.0" y1="48.9" x2="91.4" y2="57.3" stroke="#a87818" stroke-width=".5"/><line x1="98.1" y1="50.7" x2="93.2" y2="45.8" stroke="#a87818" stroke-width=".5"/><line x1="98.1" y1="50.7" x2="102.9" y2="47.6" stroke="#a87818" stroke-width=".5"/><line x1="98.1" y1="50.7" x2="105.3" y2="43.4" stroke="#a87818" stroke-width=".5"/><line x1="98.1" y1="50.7" x2="89.0" y2="48.9" stroke="#a87818" stroke-width=".5"/><line x1="98.1" y1="50.7" x2="91.4" y2="57.3" stroke="#a87818" stroke-width=".5"/><line x1="98.1" y1="50.7" x2="99.3" y2="60.3" stroke="#a87818" stroke-width=".5"/><line x1="98.1" y1="50.7" x2="103.5" y2="56.7" stroke="#a87818" stroke-width=".5"/><line x1="55.9" y1="60.3" x2="60.1" y2="57.3" stroke="#a87818" stroke-width=".5"/><line x1="55.9" y1="60.3" x2="52.9" y2="63.9" stroke="#a87818" stroke-width=".5"/><line x1="55.9" y1="60.3" x2="58.3" y2="71.2" stroke="#a87818" stroke-width=".5"/><line x1="60.1" y1="57.3" x2="57.7" y2="48.9" stroke="#a87818" stroke-width=".5"/><line x1="60.1" y1="57.3" x2="66.7" y2="50.7" stroke="#a87818" stroke-width=".5"/><line x1="60.1" y1="57.3" x2="55.9" y2="60.3" stroke="#a87818" stroke-width=".5"/><line x1="60.1" y1="57.3" x2="67.3" y2="60.3" stroke="#a87818" stroke-width=".5"/><line x1="60.1" y1="57.3" x2="52.9" y2="63.9" stroke="#a87818" stroke-width=".5"/><line x1="67.3" y1="60.3" x2="66.7" y2="50.7" stroke="#a87818" stroke-width=".5"/><line x1="67.3" y1="60.3" x2="60.1" y2="57.3" stroke="#a87818" stroke-width=".5"/><line x1="67.3" y1="60.3" x2="72.1" y2="56.7" stroke="#a87818" stroke-width=".5"/><line x1="67.3" y1="60.3" x2="70.3" y2="66.9" stroke="#a87818" stroke-width=".5"/><line x1="67.3" y1="60.3" x2="74.6" y2="63.9" stroke="#a87818" stroke-width=".5"/><line x1="72.1" y1="56.7" x2="71.5" y2="47.0" stroke="#a87818" stroke-width=".5"/><line x1="72.1" y1="56.7" x2="66.7" y2="50.7" stroke="#a87818" stroke-width=".5"/><line x1="72.1" y1="56.7" x2="67.3" y2="60.3" stroke="#a87818" stroke-width=".5"/><line x1="72.1" y1="56.7" x2="70.3" y2="66.9" stroke="#a87818" stroke-width=".5"/><line x1="72.1" y1="56.7" x2="74.6" y2="63.9" stroke="#a87818" stroke-width=".5"/><line x1="86.6" y1="60.3" x2="91.4" y2="57.3" stroke="#a87818" stroke-width=".5"/><line x1="86.6" y1="60.3" x2="84.2" y2="63.9" stroke="#a87818" stroke-width=".5"/><line x1="86.6" y1="60.3" x2="87.2" y2="71.2" stroke="#a87818" stroke-width=".5"/><line x1="91.4" y1="57.3" x2="89.0" y2="48.9" stroke="#a87818" stroke-width=".5"/><line x1="91.4" y1="57.3" x2="98.1" y2="50.7" stroke="#a87818" stroke-width=".5"/><line x1="91.4" y1="57.3" x2="86.6" y2="60.3" stroke="#a87818" stroke-width=".5"/><line x1="91.4" y1="57.3" x2="99.3" y2="60.3" stroke="#a87818" stroke-width=".5"/><line x1="91.4" y1="57.3" x2="84.2" y2="63.9" stroke="#a87818" stroke-width=".5"/><line x1="99.3" y1="60.3" x2="98.1" y2="50.7" stroke="#a87818" stroke-width=".5"/><line x1="99.3" y1="60.3" x2="91.4" y2="57.3" stroke="#a87818" stroke-width=".5"/><line x1="99.3" y1="60.3" x2="103.5" y2="56.7" stroke="#a87818" stroke-width=".5"/><line x1="99.3" y1="60.3" x2="101.7" y2="66.9" stroke="#a87818" stroke-width=".5"/><line x1="99.3" y1="60.3" x2="105.9" y2="63.9" stroke="#a87818" stroke-width=".5"/><line x1="103.5" y1="56.7" x2="102.9" y2="47.6" stroke="#a87818" stroke-width=".5"/><line x1="103.5" y1="56.7" x2="98.1" y2="50.7" stroke="#a87818" stroke-width=".5"/><line x1="103.5" y1="56.7" x2="99.3" y2="60.3" stroke="#a87818" stroke-width=".5"/><line x1="103.5" y1="56.7" x2="101.7" y2="66.9" stroke="#a87818" stroke-width=".5"/><line x1="103.5" y1="56.7" x2="105.9" y2="63.9" stroke="#a87818" stroke-width=".5"/><line x1="52.9" y1="63.9" x2="55.9" y2="60.3" stroke="#a87818" stroke-width=".5"/><line x1="52.9" y1="63.9" x2="60.1" y2="57.3" stroke="#a87818" stroke-width=".5"/><line x1="52.9" y1="63.9" x2="58.3" y2="71.2" stroke="#a87818" stroke-width=".5"/><line x1="70.3" y1="66.9" x2="67.3" y2="60.3" stroke="#a87818" stroke-width=".5"/><line x1="70.3" y1="66.9" x2="72.1" y2="56.7" stroke="#a87818" stroke-width=".5"/><line x1="70.3" y1="66.9" x2="74.6" y2="63.9" stroke="#a87818" stroke-width=".5"/><line x1="70.3" y1="66.9" x2="65.5" y2="72.4" stroke="#a87818" stroke-width=".5"/><line x1="74.6" y1="63.9" x2="67.3" y2="60.3" stroke="#a87818" stroke-width=".5"/><line x1="74.6" y1="63.9" x2="72.1" y2="56.7" stroke="#a87818" stroke-width=".5"/><line x1="74.6" y1="63.9" x2="70.3" y2="66.9" stroke="#a87818" stroke-width=".5"/><line x1="74.6" y1="63.9" x2="84.2" y2="63.9" stroke="#a87818" stroke-width=".5"/><line x1="74.6" y1="63.9" x2="81.2" y2="72.4" stroke="#a87818" stroke-width=".5"/><line x1="84.2" y1="63.9" x2="86.6" y2="60.3" stroke="#a87818" stroke-width=".5"/><line x1="84.2" y1="63.9" x2="91.4" y2="57.3" stroke="#a87818" stroke-width=".5"/><line x1="84.2" y1="63.9" x2="74.6" y2="63.9" stroke="#a87818" stroke-width=".5"/><line x1="84.2" y1="63.9" x2="81.2" y2="72.4" stroke="#a87818" stroke-width=".5"/><line x1="84.2" y1="63.9" x2="87.2" y2="71.2" stroke="#a87818" stroke-width=".5"/><line x1="101.7" y1="66.9" x2="99.3" y2="60.3" stroke="#a87818" stroke-width=".5"/><line x1="101.7" y1="66.9" x2="103.5" y2="56.7" stroke="#a87818" stroke-width=".5"/><line x1="101.7" y1="66.9" x2="105.9" y2="63.9" stroke="#a87818" stroke-width=".5"/><line x1="101.7" y1="66.9" x2="95.6" y2="72.4" stroke="#a87818" stroke-width=".5"/><line x1="105.9" y1="63.9" x2="99.3" y2="60.3" stroke="#a87818" stroke-width=".5"/><line x1="105.9" y1="63.9" x2="103.5" y2="56.7" stroke="#a87818" stroke-width=".5"/><line x1="105.9" y1="63.9" x2="101.7" y2="66.9" stroke="#a87818" stroke-width=".5"/><line x1="58.3" y1="71.2" x2="55.9" y2="60.3" stroke="#a87818" stroke-width=".5"/><line x1="58.3" y1="71.2" x2="52.9" y2="63.9" stroke="#a87818" stroke-width=".5"/><line x1="58.3" y1="71.2" x2="65.5" y2="72.4" stroke="#a87818" stroke-width=".5"/><line x1="65.5" y1="72.4" x2="70.3" y2="66.9" stroke="#a87818" stroke-width=".5"/><line x1="65.5" y1="72.4" x2="58.3" y2="71.2" stroke="#a87818" stroke-width=".5"/><line x1="81.2" y1="72.4" x2="74.6" y2="63.9" stroke="#a87818" stroke-width=".5"/><line x1="81.2" y1="72.4" x2="84.2" y2="63.9" stroke="#a87818" stroke-width=".5"/><line x1="81.2" y1="72.4" x2="87.2" y2="71.2" stroke="#a87818" stroke-width=".5"/><line x1="87.2" y1="71.2" x2="86.6" y2="60.3" stroke="#a87818" stroke-width=".5"/><line x1="87.2" y1="71.2" x2="84.2" y2="63.9" stroke="#a87818" stroke-width=".5"/><line x1="87.2" y1="71.2" x2="81.2" y2="72.4" stroke="#a87818" stroke-width=".5"/><line x1="87.2" y1="71.2" x2="95.6" y2="72.4" stroke="#a87818" stroke-width=".5"/><line x1="95.6" y1="72.4" x2="101.7" y2="66.9" stroke="#a87818" stroke-width=".5"/><line x1="95.6" y1="72.4" x2="87.2" y2="71.2" stroke="#a87818" stroke-width=".5"/><circle cx="50.4" cy="45.2" r="2.4" fill="#f4ec10"/><circle cx="54.7" cy="42.2" r="2.4" fill="#f4ec10"/><circle cx="61.9" cy="45.6" r="2.4" fill="#f4ec10"/><circle cx="71.5" cy="47.0" r="2.4" fill="#f4ec10"/><circle cx="73.9" cy="43.4" r="2.4" fill="#f4ec10"/><circle cx="81.8" cy="45.8" r="2.4" fill="#f4ec10"/><circle cx="86.0" cy="42.2" r="2.4" fill="#f4ec10"/><circle cx="93.2" cy="45.8" r="2.4" fill="#f4ec10"/><circle cx="102.9" cy="47.6" r="2.4" fill="#f4ec10"/><circle cx="105.3" cy="43.4" r="2.4" fill="#f4ec10"/><circle cx="110.1" cy="41.0" r="2.4" fill="#f4ec10"/><circle cx="57.7" cy="48.9" r="2.4" fill="#f4ec10"/><circle cx="66.7" cy="50.7" r="2.4" fill="#f4ec10"/><circle cx="89.0" cy="48.9" r="2.4" fill="#f4ec10"/><circle cx="98.1" cy="50.7" r="2.4" fill="#f4ec10"/><circle cx="55.9" cy="60.3" r="2.4" fill="#f4ec10"/><circle cx="60.1" cy="57.3" r="2.4" fill="#f4ec10"/><circle cx="67.3" cy="60.3" r="2.4" fill="#f4ec10"/><circle cx="72.1" cy="56.7" r="2.4" fill="#f4ec10"/><circle cx="86.6" cy="60.3" r="2.4" fill="#f4ec10"/><circle cx="91.4" cy="57.3" r="2.4" fill="#f4ec10"/><circle cx="99.3" cy="60.3" r="2.4" fill="#f4ec10"/><circle cx="103.5" cy="56.7" r="2.4" fill="#f4ec10"/><circle cx="52.9" cy="63.9" r="2.4" fill="#f4ec10"/><circle cx="70.3" cy="66.9" r="2.4" fill="#f4ec10"/><circle cx="74.6" cy="63.9" r="2.4" fill="#f4ec10"/><circle cx="84.2" cy="63.9" r="2.4" fill="#f4ec10"/><circle cx="101.7" cy="66.9" r="2.4" fill="#f4ec10"/><circle cx="105.9" cy="63.9" r="2.4" fill="#f4ec10"/><circle cx="58.3" cy="71.2" r="2.4" fill="#f4ec10"/><circle cx="65.5" cy="72.4" r="2.4" fill="#f4ec10"/><circle cx="81.2" cy="72.4" r="2.4" fill="#f4ec10"/><circle cx="87.2" cy="71.2" r="2.4" fill="#f4ec10"/><circle cx="95.6" cy="72.4" r="2.4" fill="#f4ec10"/><path d="M18.5 19.3V29.0H26.9" stroke="#777" stroke-width=".4" fill="none"/></svg></div>
<div class="t" style="left:75.0px;top:250px;font-size:12px;letter-spacing:-0.37px;">1252235::Picture 1</div>
<div class="t" style="left:42.0px;top:420px;font-size:12px;letter-spacing:-0.24px;">Na3 P S4 :: Unit cell with PO...</div>
<div class="t" style="left:42.0px;top:590px;font-size:12px;letter-spacing:-0.42px;">Na3 P S4 :: Super cell 2x2x2 ...</div>
<div class="a" style="left:30px;top:690px;width:202px;height:2px;background:#f8f8f8"></div>
<div class="a" style="left:97px;top:690px;width:67px;height:20px;background:#fcfaf2;border-radius:0 0 3px 3px"></div>
<svg class="a" style="left:34px;top:693px" width="16" height="16" viewBox="0 0 16 16"><rect x="1.5" y="2.5" width="13" height="11" fill="#fff" stroke="#1e3a8a"/><rect x="2" y="3" width="12" height="2" fill="#5d8fe0"/><path d="M4 6V12H7M4 9H7M8 7H12M8 9H12M8 11H12" stroke="#333" stroke-width=".8" fill="none"/></svg>
<div class="t" style="left:54.0px;top:696px;font-size:12px;color:#fff;letter-spacing:-0.29px;">Navi...</div>
<svg class="a" style="left:101px;top:693px" width="16" height="16" viewBox="0 0 16 16"><rect x="1.5" y="2.5" width="13" height="11" fill="#fff" stroke="#1e3a8a"/><rect x="2" y="3" width="12" height="2" fill="#5d8fe0"/><circle cx="9" cy="9" r="4" fill="#eee" stroke="#777"/><path d="M2 10L5 6L7 8Z" fill="#3c3"/></svg>
<div class="t" style="left:121.0px;top:696px;font-size:12px;letter-spacing:-0.57px;">Rece...</div>
<svg class="a" style="left:169px;top:693px" width="16" height="16" viewBox="0 0 16 16"><rect x="1.5" y="2.5" width="13" height="11" fill="#fff" stroke="#1e3a8a"/><rect x="2" y="3" width="12" height="2" fill="#5d8fe0"/><path d="M5 8Q9 5 11 9Q11 13 7 12" stroke="#3a6fd0" stroke-width="2" fill="none"/></svg>
<div class="t" style="left:188.0px;top:696px;font-size:12px;color:#fff;letter-spacing:-0.24px;">Undo...</div>
<div class="a" style="left:236px;top:80px;width:1216px;height:254px;background:#fff;border-top:1px solid #a8a8a8;border-left:1px solid #c8c8c8"></div>
<div class="a" style="left:237px;top:81px;width:21px;height:253px;background:#efefef;border:1px solid #a8a8a8;border-top:none"></div>
<svg class="a" style="left:243px;top:87px" width="10" height="9" viewBox="0 0 10 9"><path d="M1 1L9 8M9 1L1 8" stroke="#707070" stroke-width="2"/></svg>
<svg class="a" style="left:244px;top:319px" width="10" height="10" viewBox="0 0 10 10"><path d="M0 0H6L0 6Z" fill="#777"/><path d="M1 1L8 8" stroke="#777" stroke-width="2"/></svg>
<div class="a" style="left:258px;top:81px;width:1176px;height:20px;background:linear-gradient(180deg,#fff 0,#fff 45%,#f1f2f4 50%,#f1f2f4 100%);border-bottom:1px solid #d5d5d5"></div>
<div class="a" style="left:317px;top:82px;width:1px;height:18px;background:#e2e3e5"></div>
<div class="a" style="left:437px;top:82px;width:1px;height:18px;background:#e2e3e5"></div>
<div class="a" style="left:497px;top:82px;width:1px;height:18px;background:#e2e3e5"></div>
<div class="a" style="left:557px;top:82px;width:1px;height:18px;background:#e2e3e5"></div>
<div class="a" style="left:677px;top:82px;width:1px;height:18px;background:#e2e3e5"></div>
<div class="a" style="left:797px;top:82px;width:1px;height:18px;background:#e2e3e5"></div>
<div class="a" style="left:857px;top:82px;width:1px;height:18px;background:#e2e3e5"></div>
<div class="a" style="left:1064px;top:82px;width:1px;height:18px;background:#e2e3e5"></div>
<div class="t" style="left:263.0px;top:86px;font-size:12px;letter-spacing:-0.23px;">No.</div>
<div class="t" style="left:323.0px;top:86px;font-size:12px;letter-spacing:0.15px;">Title</div>
<div class="t" style="left:470.0px;top:86px;font-size:12px;letter-spacing:-0.42px;">Pics</div>
<div class="t" style="left:503.0px;top:86px;font-size:12px;letter-spacing:-0.17px;">Code</div>
<div class="t" style="left:564.0px;top:86px;font-size:12px;letter-spacing:-0.09px;">Formula sum</div>
<div class="t" style="left:684.0px;top:86px;font-size:12px;letter-spacing:0.22px;">HM symbol</div>
<div class="t" style="left:811.0px;top:86px;font-size:12px;letter-spacing:-0.72px;">SGR no.</div>
<div class="t" style="left:864.0px;top:86px;font-size:12px;letter-spacing:-0.18px;">Cell parameters</div>
<div class="a" style="left:278px;top:102px;width:40px;height:19px;background:#a9d4f8"></div>
<div class="a" style="left:263px;top:104px;width:13px;height:13px;background-color:#fff;background-image:linear-gradient(90deg,#808080 1px,transparent 1px),linear-gradient(180deg,#808080 1px,transparent 1px);background-size:3px 3px"></div>
<div class="t" style="left:280.0px;top:106px;font-size:12px;letter-spacing:-0.67px;">9</div>
<div class="t" style="left:323.0px;top:106px;font-size:12px;letter-spacing:-0.67px;">542477</div>
<div class="t" style="left:486.0px;top:106px;font-size:12px;letter-spacing:-1.67px;">1</div>
<div class="t" style="left:503.0px;top:106px;font-size:12px;letter-spacing:-0.67px;">542477</div>
<div class="t" style="left:564.0px;top:106px;font-size:12px;letter-spacing:-0.64px;">O3V2</div>
<div class="t" style="left:684.0px;top:106px;font-size:12px;letter-spacing:-0.43px;">R -3 c</div>
<div class="t" style="left:834.0px;top:106px;font-size:12px;letter-spacing:-0.67px;">167</div>
<div class="t" style="left:864.0px;top:106px;font-size:12px;letter-spacing:-0.60px;">4.953,4.953,14.006,90.00,90.00,120.00</div>
<div class="a" style="left:278px;top:121px;width:40px;height:19px;background:#a8dcbc"></div>
<div class="a" style="left:263px;top:123px;width:13px;height:13px;background-color:#fff;background-image:linear-gradient(90deg,#808080 1px,transparent 1px),linear-gradient(180deg,#808080 1px,transparent 1px);background-size:3px 3px"></div>
<div class="t" style="left:280.0px;top:125px;font-size:12px;letter-spacing:-0.67px;">10</div>
<div class="t" style="left:323.0px;top:125px;font-size:12px;letter-spacing:-0.67px;">1250003</div>
<div class="t" style="left:486.0px;top:125px;font-size:12px;letter-spacing:-1.67px;">1</div>
<div class="t" style="left:503.0px;top:125px;font-size:12px;letter-spacing:-0.67px;">1250003</div>
<div class="t" style="left:564.0px;top:125px;font-size:12px;letter-spacing:-0.64px;">O5V3</div>
<div class="t" style="left:684.0px;top:125px;font-size:12px;letter-spacing:-0.44px;">P 1 21/n 1</div>
<div class="t" style="left:840.0px;top:125px;font-size:12px;letter-spacing:-0.67px;">14</div>
<div class="t" style="left:864.0px;top:125px;font-size:12px;letter-spacing:-0.60px;">10.004,5.040,9.854,90.00,137.90,90.00</div>
<div class="a" style="left:278px;top:140px;width:40px;height:19px;background:#f7dc6c"></div>
<div class="a" style="left:263px;top:142px;width:13px;height:13px;background-color:#fff;background-image:linear-gradient(90deg,#808080 1px,transparent 1px),linear-gradient(180deg,#808080 1px,transparent 1px);background-size:3px 3px"></div>
<div class="t" style="left:280.0px;top:144px;font-size:12px;letter-spacing:-0.23px;">11</div>
<div class="t" style="left:323.0px;top:144px;font-size:12px;letter-spacing:-0.67px;">1250092</div>
<div class="t" style="left:486.0px;top:144px;font-size:12px;letter-spacing:-1.67px;">1</div>
<div class="t" style="left:503.0px;top:144px;font-size:12px;letter-spacing:-0.67px;">1250092</div>
<div class="t" style="left:564.0px;top:144px;font-size:12px;letter-spacing:-0.64px;">O7V4</div>
<div class="t" style="left:684.0px;top:144px;font-size:12px;letter-spacing:-0.50px;">A1-</div>
<div class="t" style="left:846.0px;top:144px;font-size:12px;letter-spacing:-0.67px;">2</div>
<div class="t" style="left:864.0px;top:144px;font-size:12px;letter-spacing:-0.60px;">5.509,7.008,12.256,95.10,95.17,109.25</div>
<div class="a" style="left:278px;top:159px;width:40px;height:19px;background:#d8c2f0"></div>
<div class="a" style="left:263px;top:161px;width:13px;height:13px;background-color:#fff;background-image:linear-gradient(90deg,#808080 1px,transparent 1px),linear-gradient(180deg,#808080 1px,transparent 1px);background-size:3px 3px"></div>
<div class="t" style="left:280.0px;top:163px;font-size:12px;letter-spacing:-0.67px;">12</div>
<div class="t" style="left:323.0px;top:163px;font-size:12px;letter-spacing:-0.67px;">1250093</div>
<div class="t" style="left:486.0px;top:163px;font-size:12px;letter-spacing:-1.67px;">1</div>
<div class="t" style="left:503.0px;top:163px;font-size:12px;letter-spacing:-0.67px;">1250093</div>
<div class="t" style="left:564.0px;top:163px;font-size:12px;letter-spacing:-0.64px;">O7V4</div>
<div class="t" style="left:684.0px;top:163px;font-size:12px;letter-spacing:-0.50px;">A1-</div>
<div class="t" style="left:846.0px;top:163px;font-size:12px;letter-spacing:-0.67px;">2</div>
<div class="t" style="left:864.0px;top:163px;font-size:12px;letter-spacing:-0.60px;">5.503,6.997,12.256,94.86,95.17,109.39</div>
<div class="a" style="left:278px;top:178px;width:40px;height:19px;background:#a9d4f8"></div>
<div class="a" style="left:263px;top:180px;width:13px;height:13px;background-color:#fff;background-image:linear-gradient(90deg,#808080 1px,transparent 1px),linear-gradient(180deg,#808080 1px,transparent 1px);background-size:3px 3px"></div>
<div class="t" style="left:280.0px;top:182px;font-size:12px;letter-spacing:-0.67px;">13</div>
<div class="t" style="left:323.0px;top:182px;font-size:12px;letter-spacing:-0.67px;">1250105</div>
<div class="t" style="left:486.0px;top:182px;font-size:12px;letter-spacing:-1.67px;">1</div>
<div class="t" style="left:503.0px;top:182px;font-size:12px;letter-spacing:-0.67px;">1250105</div>
<div class="t" style="left:564.0px;top:182px;font-size:12px;letter-spacing:-0.64px;">O9V5</div>
<div class="t" style="left:684.0px;top:182px;font-size:12px;letter-spacing:-0.44px;">P -1</div>
<div class="t" style="left:846.0px;top:182px;font-size:12px;letter-spacing:-0.67px;">2</div>
<div class="t" style="left:864.0px;top:182px;font-size:12px;letter-spacing:-0.58px;">7.002,8.352,10.905,91.91,108.39,110.50</div>
<div class="a" style="left:278px;top:197px;width:40px;height:19px;background:#a8dcbc"></div>
<div class="a" style="left:263px;top:199px;width:13px;height:13px;background-color:#fff;background-image:linear-gradient(90deg,#808080 1px,transparent 1px),linear-gradient(180deg,#808080 1px,transparent 1px);background-size:3px 3px"></div>
<div class="t" style="left:280.0px;top:201px;font-size:12px;letter-spacing:-0.67px;">14</div>
<div class="t" style="left:323.0px;top:201px;font-size:12px;letter-spacing:-0.67px;">1250106</div>
<div class="t" style="left:486.0px;top:201px;font-size:12px;letter-spacing:-1.67px;">1</div>
<div class="t" style="left:503.0px;top:201px;font-size:12px;letter-spacing:-0.67px;">1250106</div>
<div class="t" style="left:564.0px;top:201px;font-size:12px;letter-spacing:-0.64px;">O9V5</div>
<div class="t" style="left:684.0px;top:201px;font-size:12px;letter-spacing:-0.50px;">B1-</div>
<div class="t" style="left:846.0px;top:201px;font-size:12px;letter-spacing:-0.67px;">2</div>
<div class="t" style="left:864.0px;top:201px;font-size:12px;letter-spacing:-0.58px;">7.005,8.363,10.983,91.98,108.34,110.39</div>
<div class="a" style="left:278px;top:216px;width:40px;height:19px;background:#f7dc6c"></div>
<div class="a" style="left:263px;top:218px;width:13px;height:13px;background-color:#fff;background-image:linear-gradient(90deg,#808080 1px,transparent 1px),linear-gradient(180deg,#808080 1px,transparent 1px);background-size:3px 3px"></div>
<div class="t" style="left:280.0px;top:220px;font-size:12px;letter-spacing:-0.67px;">15</div>
<div class="t" style="left:323.0px;top:220px;font-size:12px;letter-spacing:-0.67px;">1250121</div>
<div class="t" style="left:486.0px;top:220px;font-size:12px;letter-spacing:-1.67px;">1</div>
<div class="t" style="left:503.0px;top:220px;font-size:12px;letter-spacing:-0.67px;">1250121</div>
<div class="t" style="left:564.0px;top:220px;font-size:12px;letter-spacing:-0.63px;">O2V</div>
<div class="t" style="left:684.0px;top:220px;font-size:12px;letter-spacing:-0.52px;">C1-</div>
<div class="t" style="left:846.0px;top:220px;font-size:12px;letter-spacing:-0.67px;">2</div>
<div class="t" style="left:864.0px;top:220px;font-size:12px;letter-spacing:-0.60px;">9.060,5.772,4.520,89.99,91.40,89.83</div>
<div class="a" style="left:278px;top:235px;width:40px;height:19px;background:#d8c2f0"></div>
<div class="a" style="left:263px;top:237px;width:13px;height:13px;background-color:#fff;background-image:linear-gradient(90deg,#808080 1px,transparent 1px),linear-gradient(180deg,#808080 1px,transparent 1px);background-size:3px 3px"></div>
<div class="t" style="left:280.0px;top:239px;font-size:12px;letter-spacing:-0.67px;">16</div>
<div class="t" style="left:323.0px;top:239px;font-size:12px;letter-spacing:-0.67px;">1250180</div>
<div class="t" style="left:486.0px;top:239px;font-size:12px;letter-spacing:-1.67px;">1</div>
<div class="t" style="left:503.0px;top:239px;font-size:12px;letter-spacing:-0.67px;">1250180</div>
<div class="t" style="left:564.0px;top:239px;font-size:12px;letter-spacing:-0.63px;">O2V</div>
<div class="t" style="left:684.0px;top:239px;font-size:12px;letter-spacing:-0.46px;">C 1 2/m 1</div>
<div class="t" style="left:840.0px;top:239px;font-size:12px;letter-spacing:-0.67px;">12</div>
<div class="t" style="left:864.0px;top:239px;font-size:12px;letter-spacing:-0.60px;">12.093,3.702,6.433,90.00,106.97,90.00</div>
<div class="a" style="left:278px;top:254px;width:40px;height:19px;background:#a9d4f8"></div>
<div class="a" style="left:263px;top:256px;width:13px;height:13px;background-color:#fff;background-image:linear-gradient(90deg,#808080 1px,transparent 1px),linear-gradient(180deg,#808080 1px,transparent 1px);background-size:3px 3px"></div>
<div class="t" style="left:280.0px;top:258px;font-size:12px;letter-spacing:-0.67px;">17</div>
<div class="t" style="left:323.0px;top:258px;font-size:12px;letter-spacing:-0.67px;">1250679</div>
<div class="t" style="left:486.0px;top:258px;font-size:12px;letter-spacing:-1.67px;">1</div>
<div class="t" style="left:503.0px;top:258px;font-size:12px;letter-spacing:-0.67px;">1250679</div>
<div class="t" style="left:564.0px;top:258px;font-size:12px;letter-spacing:-0.65px;">O13V6</div>
<div class="t" style="left:684.0px;top:258px;font-size:12px;letter-spacing:-0.52px;">C m m a</div>
<div class="t" style="left:840.0px;top:258px;font-size:12px;letter-spacing:-0.67px;">67</div>
<div class="t" style="left:864.0px;top:258px;font-size:12px;letter-spacing:-0.58px;">11.922,19.912,3.680,90.00,90.00,90.00</div>
<div class="a" style="left:278px;top:273px;width:40px;height:19px;background:#a8dcbc"></div>
<div class="a" style="left:263px;top:275px;width:13px;height:13px;background-color:#fff;background-image:linear-gradient(90deg,#808080 1px,transparent 1px),linear-gradient(180deg,#808080 1px,transparent 1px);background-size:3px 3px"></div>
<div class="t" style="left:280.0px;top:277px;font-size:12px;letter-spacing:-0.67px;">18</div>
<div class="t" style="left:323.0px;top:277px;font-size:12px;letter-spacing:-0.67px;">1252234</div>
<div class="t" style="left:486.0px;top:277px;font-size:12px;letter-spacing:-1.67px;">1</div>
<div class="t" style="left:503.0px;top:277px;font-size:12px;letter-spacing:-0.67px;">1252234</div>
<div class="t" style="left:564.0px;top:277px;font-size:12px;letter-spacing:-0.63px;">O2V</div>
<div class="t" style="left:684.0px;top:277px;font-size:12px;letter-spacing:-0.46px;">P 42/n c m</div>
<div class="t" style="left:834.0px;top:277px;font-size:12px;letter-spacing:-0.67px;">138</div>
<div class="t" style="left:864.0px;top:277px;font-size:12px;letter-spacing:-0.60px;">8.434,8.434,7.678,90.00,90.00,90.00</div>
<div class="a" style="left:278px;top:292px;width:787px;height:19px;background:#3399ff"></div>
<div class="a" style="left:263px;top:294px;width:13px;height:13px;background-color:#a8d4ff;background-image:linear-gradient(90deg,#5a8ee0 1px,transparent 1px),linear-gradient(180deg,#5a8ee0 1px,transparent 1px);background-size:3px 3px"></div>
<div class="t" style="left:280.0px;top:296px;font-size:12px;color:#fff;letter-spacing:-0.67px;">19</div>
<div class="t" style="left:323.0px;top:296px;font-size:12px;color:#fff;letter-spacing:-0.67px;">1252235</div>
<div class="t" style="left:486.0px;top:296px;font-size:12px;color:#fff;letter-spacing:-1.67px;">1</div>
<div class="t" style="left:503.0px;top:296px;font-size:12px;color:#fff;letter-spacing:-0.67px;">1252235</div>
<div class="t" style="left:564.0px;top:296px;font-size:12px;color:#fff;letter-spacing:-0.63px;">O2V</div>
<div class="t" style="left:684.0px;top:296px;font-size:12px;color:#fff;letter-spacing:-0.41px;">P 4/n c c</div>
<div class="t" style="left:834.0px;top:296px;font-size:12px;color:#fff;letter-spacing:-0.67px;">130</div>
<div class="t" style="left:864.0px;top:296px;font-size:12px;color:#fff;letter-spacing:-0.60px;">8.440,8.440,7.666,90.00,90.00,90.00</div>
<div class="a" style="left:278px;top:311px;width:40px;height:19px;background:#d8c2f0"></div>
<div class="a" style="left:263px;top:313px;width:13px;height:13px;background-color:#fff;background-image:linear-gradient(90deg,#808080 1px,transparent 1px),linear-gradient(180deg,#808080 1px,transparent 1px);background-size:3px 3px"></div>
<div class="t" style="left:280.0px;top:315px;font-size:12px;letter-spacing:-0.67px;">20</div>
<div class="t" style="left:323.0px;top:315px;font-size:12px;letter-spacing:-0.67px;">1252236</div>
<div class="t" style="left:486.0px;top:315px;font-size:12px;letter-spacing:-1.67px;">1</div>
<div class="t" style="left:503.0px;top:315px;font-size:12px;letter-spacing:-0.67px;">1252236</div>
<div class="t" style="left:564.0px;top:315px;font-size:12px;letter-spacing:-0.63px;">O2V</div>
<div class="t" style="left:684.0px;top:315px;font-size:12px;letter-spacing:-0.43px;">I 4/m</div>
<div class="t" style="left:840.0px;top:315px;font-size:12px;letter-spacing:-0.67px;">87</div>
<div class="t" style="left:864.0px;top:315px;font-size:12px;letter-spacing:-0.60px;">8.476,8.476,3.824,90.00,90.00,90.00</div>
<div class="a" style="left:1434px;top:81px;width:17px;height:252px;background:linear-gradient(90deg,#e8e8e8,#f2f2f2 50%,#e8e8e8)"></div>
<svg class="a" style="left:1438px;top:87px" width="9" height="5" viewBox="0 0 9 5"><path d="M1 4.5L4.5 1L8 4.5Z" fill="#404040"/></svg>
<svg class="a" style="left:1438px;top:323px" width="9" height="5" viewBox="0 0 9 5"><path d="M1 0.5L4.5 4L8 0.5Z" fill="#404040"/></svg>
<div class="a" style="left:1435px;top:188px;width:15px;height:128px;border:1px solid #979797;border-radius:2px;background:linear-gradient(90deg,#f0f0f0,#dcdcdc)"></div>
<div class="a" style="left:1438px;top:246px;width:8px;height:7px;border-top:1px solid #555;border-bottom:1px solid #555"></div><div class="a" style="left:1438px;top:249px;width:8px;height:1px;background:#555"></div>
<div class="a" style="left:236px;top:333px;width:1216px;height:379px;background:#eeeeee"></div>
<div class="a" style="left:236px;top:330px;width:1198px;height:4px;background:#fff"></div>
<div class="a" style="left:237px;top:339px;width:768px;height:373px;background:#eeeeee;border-top:1px solid #8e8e8e;border-left:1px solid #bdbdbd"></div>
<svg class="a" style="left:243px;top:350px" width="10" height="8" viewBox="0 0 10 8"><rect x="0" y="0" width="4" height="3" fill="#777"/><rect x="6" y="0" width="4" height="3" fill="#777"/><rect x="0" y="5" width="4" height="3" fill="#777"/><rect x="6" y="5" width="4" height="3" fill="#777"/></svg>
<div class="a" style="left:263px;top:342px;width:155px;height:24px;border:1px solid #c8c8c8;border-bottom:none;background:linear-gradient(180deg,#fffcec 0,#fbf0b0 50%,#f6df70 100%)"></div>
<div class="t" style="left:291.0px;top:350px;font-size:12px;letter-spacing:-0.67px;">1252235 :: Picture 1</div>
<div class="a" style="left:423px;top:344px;width:38px;height:21px;border:1px solid #9a9a9a;border-bottom:none;background:#fff"></div>
<div class="a" style="left:425px;top:346px;width:34px;height:19px;background:linear-gradient(180deg,#f2f2f2,#d8d8d8)"></div>
<div class="a" style="left:445px;top:347px;width:1px;height:17px;background:#fafafa"></div>
<svg class="a" style="left:427px;top:347px" width="16" height="16" viewBox="0 0 16 16"><rect x="3.5" y="4.5" width="11" height="10" fill="#e8f2fc" stroke="#1a2a60"/><rect x="4" y="5" width="10" height="2" fill="#3a70d8"/><circle cx="4" cy="4" r="3.3" fill="#f4f080" stroke="#d8c040" stroke-width=".5" stroke-dasharray="1 .8"/></svg>
<svg class="a" style="left:451px;top:353px" width="6" height="4" viewBox="0 0 6 4"><path d="M0 0H6L3 3.5Z" fill="#999"/></svg>
<svg class="a" style="left:988px;top:350px" width="11" height="10" viewBox="0 0 11 10"><path d="M1 1L5 5L1 9M6 1L10 5L6 9" stroke="#777" stroke-width="2" fill="none"/></svg>
<div class="a" style="left:238px;top:364px;width:767px;height:4px;background:linear-gradient(180deg,#c8b878 0,#c8b878 1px,#f2e4a8 1px,#ecd890 100%)"></div>
<div class="a" style="left:238px;top:368px;width:767px;height:317px;background:#000"></div>
<div class="a" style="left:238px;top:685px;width:767px;height:2px;background:#f8f8f8"></div>
<div class="a" style="left:238px;top:688px;width:15px;height:22px;border:1px solid #c8c8c8;background:#f4f4f4"></div>
<svg class="a" style="left:241px;top:691px" width="10" height="16" viewBox="0 0 10 16"><path d="M1 6L5 1L9 6Z M1 10L5 15L9 10Z" fill="#999"/></svg>
<div class="a" style="left:256px;top:688px;width:20px;height:22px;border:1px solid #c8c8c8;background:#f4f4f4"></div>
<svg class="a" style="left:261px;top:696px" width="10" height="7" viewBox="0 0 10 7"><rect x="0.5" y="0.5" width="9" height="6" fill="none" stroke="#888"/><path d="M0.5 3.5H9.5M3.5 0.5V6.5M6.5 0.5V6.5" stroke="#888"/></svg>
<div class="a" style="left:280px;top:689px;width:117px;height:21px;background:#a7dab9;border:1px solid #d0d0d0;box-shadow:inset 0 0 0 1px rgba(255,255,255,.5)"></div>
<div class="t" style="left:286.0px;top:694px;font-size:12px;letter-spacing:-0.59px;">1250106 :: Picture 1</div>
<div class="a" style="left:400px;top:689px;width:117px;height:21px;background:#f7dc6c;border:1px solid #d0d0d0;box-shadow:inset 0 0 0 1px rgba(255,255,255,.5)"></div>
<div class="t" style="left:406.0px;top:694px;font-size:12px;letter-spacing:-0.59px;">1250121 :: Picture 1</div>
<div class="a" style="left:519px;top:689px;width:117px;height:21px;background:#d6c2f0;border:1px solid #d0d0d0;box-shadow:inset 0 0 0 1px rgba(255,255,255,.5)"></div>
<div class="t" style="left:525.0px;top:694px;font-size:12px;letter-spacing:-0.59px;">1250180 :: Picture 1</div>
<div class="a" style="left:638px;top:689px;width:117px;height:21px;background:#acd4f6;border:1px solid #d0d0d0;box-shadow:inset 0 0 0 1px rgba(255,255,255,.5)"></div>
<div class="t" style="left:644.0px;top:694px;font-size:12px;letter-spacing:-0.59px;">1250679 :: Picture 1</div>
<div class="a" style="left:757px;top:689px;width:117px;height:21px;background:#a7dab9;border:1px solid #d0d0d0;box-shadow:inset 0 0 0 1px rgba(255,255,255,.5)"></div>
<div class="t" style="left:763.0px;top:694px;font-size:12px;letter-spacing:-0.59px;">1252234 :: Picture 1</div>
<div class="a" style="left:876px;top:689px;width:87px;height:21px;background:#d6c2f0;border:1px solid #d0d0d0;box-shadow:inset 0 0 0 1px rgba(255,255,255,.5)"></div>
<div class="t" style="left:882.0px;top:694px;font-size:12px;letter-spacing:-0.56px;">1252236 :: Pi...</div>
<div class="a" style="left:965px;top:688px;width:39px;height:22px;border:1px solid #d0d0d0;background:#f4f4f4"></div>
<svg class="a" style="left:973px;top:695px" width="5" height="9" viewBox="0 0 5 9"><path d="M5 0V9L0 4.5Z" fill="#888"/></svg>
<svg class="a" style="left:991px;top:695px" width="5" height="9" viewBox="0 0 5 9"><path d="M0 0V9L5 4.5Z" fill="#888"/></svg>
<svg class="a" style="left:238px;top:368px" width="767" height="317" viewBox="0 0 767 317"><defs><radialGradient id="gw" cx="62%" cy="32%" r="72%"><stop offset="0" stop-color="#fff"/><stop offset=".4" stop-color="#dcdcdc"/><stop offset="1" stop-color="#7a7a7a"/></radialGradient><radialGradient id="gr" cx="60%" cy="32%" r="72%"><stop offset="0" stop-color="#ff9090"/><stop offset=".3" stop-color="#f00000"/><stop offset="1" stop-color="#900000"/></radialGradient></defs><g id="molg"><rect x="261.5" y="38.5" width="242" height="242" fill="none" stroke="#e8e8e8" stroke-width="1"/><line x1="315" y1="50" x2="273" y2="91" stroke="#f0a828" stroke-width="2.4"/><line x1="328" y1="50" x2="370" y2="92" stroke="#f0a828" stroke-width="2.4"/><line x1="273" y1="104" x2="316" y2="146" stroke="#f0a828" stroke-width="2.4"/><line x1="370" y1="106" x2="328" y2="146" stroke="#f0a828" stroke-width="2.4"/><line x1="370" y1="92" x2="404" y2="59" stroke="#f0a828" stroke-width="2.4"/><line x1="316" y1="146" x2="284" y2="180" stroke="#f0a828" stroke-width="2.4"/><line x1="328" y1="146" x2="395" y2="214" stroke="#f0a828" stroke-width="2.4"/><line x1="370" y1="106" x2="437" y2="170" stroke="#f0a828" stroke-width="2.4"/><line x1="449" y1="170" x2="482" y2="137" stroke="#f0a828" stroke-width="2.4"/><line x1="437" y1="170" x2="395" y2="214" stroke="#f0a828" stroke-width="2.4"/><line x1="449" y1="170" x2="492" y2="212" stroke="#f0a828" stroke-width="2.4"/><line x1="395" y1="226" x2="436" y2="269" stroke="#f0a828" stroke-width="2.4"/><line x1="492" y1="226" x2="448" y2="269" stroke="#f0a828" stroke-width="2.4"/><line x1="395" y1="226" x2="361" y2="259" stroke="#f0a828" stroke-width="2.4"/><line x1="315" y1="50" x2="273" y2="104" stroke="#f0a828" stroke-width="2.4"/><line x1="328" y1="50" x2="370" y2="106" stroke="#f0a828" stroke-width="2.4"/><line x1="273" y1="91" x2="316" y2="146" stroke="#f0a828" stroke-width="2.4"/><line x1="370" y1="92" x2="328" y2="146" stroke="#f0a828" stroke-width="2.4"/><line x1="450" y1="170" x2="395" y2="226" stroke="#f0a828" stroke-width="2.4"/><line x1="437" y1="170" x2="492" y2="226" stroke="#f0a828" stroke-width="2.4"/><line x1="395" y1="214" x2="448" y2="269" stroke="#f0a828" stroke-width="2.4"/><line x1="492" y1="212" x2="436" y2="269" stroke="#f0a828" stroke-width="2.4"/><circle cx="322" cy="62" r="7" fill="url(#gr)"/><circle cx="322" cy="134" r="7" fill="url(#gr)"/><circle cx="407" cy="219" r="7" fill="url(#gr)"/><circle cx="480" cy="219" r="7" fill="url(#gr)"/><circle cx="315" cy="49" r="10.8" fill="url(#gw)"/><circle cx="328" cy="50" r="10.8" fill="url(#gw)"/><circle cx="273" cy="91" r="10.8" fill="url(#gw)"/><circle cx="274" cy="104" r="10.8" fill="url(#gw)"/><circle cx="371" cy="92" r="10.8" fill="url(#gw)"/><circle cx="371" cy="106" r="10.8" fill="url(#gw)"/><circle cx="316" cy="146" r="10.8" fill="url(#gw)"/><circle cx="328" cy="146" r="10.8" fill="url(#gw)"/><circle cx="438" cy="170" r="10.8" fill="url(#gw)"/><circle cx="450" cy="170" r="10.8" fill="url(#gw)"/><circle cx="395" cy="214" r="10.8" fill="url(#gw)"/><circle cx="395" cy="226" r="10.8" fill="url(#gw)"/><circle cx="492" cy="212" r="10.8" fill="url(#gw)"/><circle cx="492" cy="226" r="10.8" fill="url(#gw)"/><circle cx="436" cy="269" r="10.8" fill="url(#gw)"/><circle cx="448" cy="269" r="10.8" fill="url(#gw)"/><circle cx="284" cy="98" r="7" fill="url(#gr)"/><circle cx="359" cy="98" r="7" fill="url(#gr)"/><circle cx="443" cy="182" r="7" fill="url(#gr)"/><circle cx="443" cy="257" r="7" fill="url(#gr)"/><circle cx="404" cy="59" r="7" fill="url(#gr)"/><circle cx="482" cy="59" r="7" fill="url(#gr)"/><circle cx="404" cy="137" r="7" fill="url(#gr)"/><circle cx="482" cy="137" r="7" fill="url(#gr)"/><circle cx="283" cy="180" r="7" fill="url(#gr)"/><circle cx="361" cy="180" r="7" fill="url(#gr)"/><circle cx="283" cy="259" r="7" fill="url(#gr)"/><circle cx="361" cy="259" r="7" fill="url(#gr)"/><path d="M56.5 56.5V24M56 56.5H87" stroke="#ccc" stroke-width="1"/><path d="M53 29L56.5 18L60 29Z M85 52L97 56L85 60Z" fill="#fff"/><text x="53" y="12" font-family="Liberation Sans" font-size="11" fill="#fff">b</text><text x="102" y="58" font-family="Liberation Sans" font-size="11" fill="#fff">a</text><rect x="721.5" y="270.5" width="44" height="46" fill="#000" stroke="#888" stroke-width="1.5"/><circle cx="732" cy="282" r="9" fill="url(#gw)"/><circle cx="732" cy="305" r="9" fill="url(#gr)"/><text x="741" y="286" font-family="Liberation Sans" font-size="11" fill="#fff">V+0</text><text x="741" y="309" font-family="Liberation Sans" font-size="11" fill="#fff">O+0</text></g></svg>
<svg class="a" style="left:50px;top:146px" width="144" height="60" viewBox="0 0 144 60"><g transform="translate(0,-0.5) scale(0.19)"><rect x="261.5" y="38.5" width="242" height="242" fill="none" stroke="#e8e8e8" stroke-width="1"/><line x1="315" y1="50" x2="273" y2="91" stroke="#f0a828" stroke-width="2.4"/><line x1="328" y1="50" x2="370" y2="92" stroke="#f0a828" stroke-width="2.4"/><line x1="273" y1="104" x2="316" y2="146" stroke="#f0a828" stroke-width="2.4"/><line x1="370" y1="106" x2="328" y2="146" stroke="#f0a828" stroke-width="2.4"/><line x1="370" y1="92" x2="404" y2="59" stroke="#f0a828" stroke-width="2.4"/><line x1="316" y1="146" x2="284" y2="180" stroke="#f0a828" stroke-width="2.4"/><line x1="328" y1="146" x2="395" y2="214" stroke="#f0a828" stroke-width="2.4"/><line x1="370" y1="106" x2="437" y2="170" stroke="#f0a828" stroke-width="2.4"/><line x1="449" y1="170" x2="482" y2="137" stroke="#f0a828" stroke-width="2.4"/><line x1="437" y1="170" x2="395" y2="214" stroke="#f0a828" stroke-width="2.4"/><line x1="449" y1="170" x2="492" y2="212" stroke="#f0a828" stroke-width="2.4"/><line x1="395" y1="226" x2="436" y2="269" stroke="#f0a828" stroke-width="2.4"/><line x1="492" y1="226" x2="448" y2="269" stroke="#f0a828" stroke-width="2.4"/><line x1="395" y1="226" x2="361" y2="259" stroke="#f0a828" stroke-width="2.4"/><line x1="315" y1="50" x2="273" y2="104" stroke="#f0a828" stroke-width="2.4"/><line x1="328" y1="50" x2="370" y2="106" stroke="#f0a828" stroke-width="2.4"/><line x1="273" y1="91" x2="316" y2="146" stroke="#f0a828" stroke-width="2.4"/><line x1="370" y1="92" x2="328" y2="146" stroke="#f0a828" stroke-width="2.4"/><line x1="450" y1="170" x2="395" y2="226" stroke="#f0a828" stroke-width="2.4"/><line x1="437" y1="170" x2="492" y2="226" stroke="#f0a828" stroke-width="2.4"/><line x1="395" y1="214" x2="448" y2="269" stroke="#f0a828" stroke-width="2.4"/><line x1="492" y1="212" x2="436" y2="269" stroke="#f0a828" stroke-width="2.4"/><circle cx="322" cy="62" r="7" fill="url(#gr)"/><circle cx="322" cy="134" r="7" fill="url(#gr)"/><circle cx="407" cy="219" r="7" fill="url(#gr)"/><circle cx="480" cy="219" r="7" fill="url(#gr)"/><circle cx="315" cy="49" r="10.8" fill="url(#gw)"/><circle cx="328" cy="50" r="10.8" fill="url(#gw)"/><circle cx="273" cy="91" r="10.8" fill="url(#gw)"/><circle cx="274" cy="104" r="10.8" fill="url(#gw)"/><circle cx="371" cy="92" r="10.8" fill="url(#gw)"/><circle cx="371" cy="106" r="10.8" fill="url(#gw)"/><circle cx="316" cy="146" r="10.8" fill="url(#gw)"/><circle cx="328" cy="146" r="10.8" fill="url(#gw)"/><circle cx="438" cy="170" r="10.8" fill="url(#gw)"/><circle cx="450" cy="170" r="10.8" fill="url(#gw)"/><circle cx="395" cy="214" r="10.8" fill="url(#gw)"/><circle cx="395" cy="226" r="10.8" fill="url(#gw)"/><circle cx="492" cy="212" r="10.8" fill="url(#gw)"/><circle cx="492" cy="226" r="10.8" fill="url(#gw)"/><circle cx="436" cy="269" r="10.8" fill="url(#gw)"/><circle cx="448" cy="269" r="10.8" fill="url(#gw)"/><circle cx="284" cy="98" r="7" fill="url(#gr)"/><circle cx="359" cy="98" r="7" fill="url(#gr)"/><circle cx="443" cy="182" r="7" fill="url(#gr)"/><circle cx="443" cy="257" r="7" fill="url(#gr)"/><circle cx="404" cy="59" r="7" fill="url(#gr)"/><circle cx="482" cy="59" r="7" fill="url(#gr)"/><circle cx="404" cy="137" r="7" fill="url(#gr)"/><circle cx="482" cy="137" r="7" fill="url(#gr)"/><circle cx="283" cy="180" r="7" fill="url(#gr)"/><circle cx="361" cy="180" r="7" fill="url(#gr)"/><circle cx="283" cy="259" r="7" fill="url(#gr)"/><circle cx="361" cy="259" r="7" fill="url(#gr)"/><path d="M56.5 56.5V24M56 56.5H87" stroke="#ccc" stroke-width="1"/><path d="M53 29L56.5 18L60 29Z M85 52L97 56L85 60Z" fill="#fff"/><text x="53" y="12" font-family="Liberation Sans" font-size="11" fill="#fff">b</text><text x="102" y="58" font-family="Liberation Sans" font-size="11" fill="#fff">a</text><rect x="721.5" y="270.5" width="44" height="46" fill="#000" stroke="#888" stroke-width="1.5"/><circle cx="732" cy="282" r="9" fill="url(#gw)"/><circle cx="732" cy="305" r="9" fill="url(#gr)"/><text x="741" y="286" font-family="Liberation Sans" font-size="11" fill="#fff">V+0</text><text x="741" y="309" font-family="Liberation Sans" font-size="11" fill="#fff">O+0</text></g><rect x="49.5" y="7.5" width="46" height="46" fill="none" stroke="#bbb" stroke-width=".8"/></svg>
<div class="a" style="left:1009px;top:339px;width:443px;height:373px;background:#fff;border-top:1px solid #8e8e8e;border-left:1px solid #a0a0a0"></div>
<div class="a" style="left:1010px;top:340px;width:442px;height:25px;background:#efefef;border-bottom:1px solid #a8a8a8"></div>
<div class="t" style="left:1017.0px;top:348px;font-size:12px;letter-spacing:-0.20px;">Data sheet</div>
<svg class="a" style="left:1078px;top:356px" width="6" height="3" viewBox="0 0 6 3"><path d="M0 0H6L3 3Z" fill="#aaa"/></svg>
<svg class="a" style="left:1434px;top:347px" width="9" height="9" viewBox="0 0 9 9"><path d="M1 1L8 8M8 1L1 8" stroke="#555" stroke-width="1.6"/></svg>
<div class="a" style="left:1021px;top:381px;width:390px;height:15px;background:#f7dc60"></div>
<div class="t" style="left:1197.3px;top:383px;font-size:12px;font-weight:bold;letter-spacing:-0.19px;">General</div>
<div class="a" style="left:1021px;top:402px;width:92px;height:15px;background:#f7dc60"></div>
<div class="t" style="left:1024.0px;top:404px;font-size:12px;font-weight:bold;letter-spacing:-0.31px;">Origin</div>
<div class="t" style="left:1120.0px;top:404px;font-size:12px;letter-spacing:-0.75px;">1252235</div>
<div class="a" style="left:1021px;top:418px;width:92px;height:15px;background:#f7dc60"></div>
<div class="t" style="left:1024.0px;top:420px;font-size:12px;font-weight:bold;letter-spacing:-0.41px;">Formula</div>
<div class="t" style="left:1120.0px;top:420px;font-size:12px;letter-spacing:-0.45px;">VO2(A) LTP</div>
<div class="a" style="left:1021px;top:450px;width:390px;height:15px;background:#f7dc60"></div>
<div class="t" style="left:1168.2px;top:452px;font-size:12px;font-weight:bold;letter-spacing:-0.17px;">Bibliographic data</div>
<div class="a" style="left:1021px;top:471px;width:92px;height:15px;background:#f7dc60"></div>
<div class="t" style="left:1024.0px;top:473px;font-size:12px;font-weight:bold;letter-spacing:-0.33px;">Author(s)</div>
<div class="t" style="left:1120.0px;top:473px;font-size:12px;letter-spacing:-0.16px;">Oka Y., Sato S., Yao T., Yamamoto N.</div>
<div class="a" style="left:1021px;top:487px;width:92px;height:15px;background:#f7dc60"></div>
<div class="t" style="left:1024.0px;top:489px;font-size:12px;font-weight:bold;letter-spacing:-0.17px;">Publication title</div>
<div class="t" style="left:1120.0px;top:489px;font-size:12px;letter-spacing:-0.10px;">Crystal Structures and Transition Mechanism of VO2(A)</div>
<div class="a" style="left:1021px;top:503px;width:92px;height:15px;background:#f7dc60"></div>
<div class="t" style="left:1024.0px;top:505px;font-size:12px;font-weight:bold;letter-spacing:-0.27px;">Citation</div>
<div class="t" style="left:1120.0px;top:505px;font-size:12px;letter-spacing:-0.26px;">Journal of Solid State Chemistry, 141, 594-598 (1998)</div>
<div class="a" style="left:1021px;top:535px;width:390px;height:15px;background:#f7dc60"></div>
<div class="t" style="left:1188.3px;top:537px;font-size:12px;font-weight:bold;letter-spacing:-0.19px;">Phase data</div>
<div class="a" style="left:1021px;top:556px;width:92px;height:15px;background:#f7dc60"></div>
<div class="t" style="left:1024.0px;top:558px;font-size:12px;font-weight:bold;letter-spacing:-0.30px;">Space-group</div>
<div class="t" style="left:1120.0px;top:558px;font-size:12px;letter-spacing:-0.07px;">P 4/n c c (130) - tetragonal</div>
<div class="a" style="left:1021px;top:572px;width:92px;height:48px;background:#f7dc60"></div>
<div class="t" style="left:1024.0px;top:591px;font-size:12px;font-weight:bold;">Cell</div>
<div class="t" style="left:1120.0px;top:574px;font-size:12px;letter-spacing:-0.34px;">a=8.4403(9) Å c=7.666(1) Å</div>
<div class="t" style="left:1120.0px;top:589px;font-size:12px;letter-spacing:-0.17px;">c/a=0.9083</div>
<div class="t" style="left:1120.0px;top:606px;font-size:12px;letter-spacing:-0.67px;">V=546.12(14) Å</div>
<div class="t" style="left:1199px;top:604px;font-size:9px">3</div>
<div class="a" style="left:1021px;top:638px;width:305px;height:15px;background:#f7dc60"></div>
<div class="t" style="left:1123.8px;top:640px;font-size:12px;font-weight:bold;letter-spacing:-0.19px;">Atomic parameters</div>
<div class="a" style="left:1021px;top:659px;width:35px;height:15px;background:#f7dc60"></div>
<div class="t" style="left:1024.0px;top:661px;font-size:12px;font-weight:bold;letter-spacing:-0.38px;">Atom</div>
<div class="a" style="left:1057px;top:659px;width:23px;height:15px;background:#f7dc60"></div>
<div class="t" style="left:1060.0px;top:661px;font-size:12px;font-weight:bold;letter-spacing:-0.32px;">Ox.</div>
<div class="a" style="left:1082px;top:659px;width:36px;height:15px;background:#f7dc60"></div>
<div class="t" style="left:1085.0px;top:661px;font-size:12px;font-weight:bold;letter-spacing:-0.34px;">Wyck.</div>
<div class="a" style="left:1120px;top:659px;width:26px;height:15px;background:#f7dc60"></div>
<div class="t" style="left:1123.0px;top:661px;font-size:12px;font-weight:bold;letter-spacing:-0.28px;">Site</div>
<div class="a" style="left:1148px;top:659px;width:58px;height:15px;background:#f7dc60"></div>
<div class="t" style="left:1168.7px;top:661px;font-size:12px;font-weight:bold;">x/a</div>
<div class="a" style="left:1208px;top:659px;width:58px;height:15px;background:#f7dc60"></div>
<div class="t" style="left:1228.3px;top:661px;font-size:12px;font-weight:bold;">y/b</div>
<div class="a" style="left:1268px;top:659px;width:58px;height:15px;background:#f7dc60"></div>
<div class="t" style="left:1289.0px;top:661px;font-size:12px;font-weight:bold;">z/c</div>
<div class="t" style="left:1028.0px;top:677px;font-size:12px;letter-spacing:-0.40px;">V</div>
<div class="t" style="left:1063.0px;top:677px;font-size:12px;letter-spacing:-0.67px;">0</div>
<div class="t" style="left:1087.0px;top:677px;font-size:12px;letter-spacing:-0.34px;">16g</div>
<div class="t" style="left:1125.0px;top:677px;font-size:12px;letter-spacing:-1.67px;">1</div>
<div class="t" style="left:1151.0px;top:677px;font-size:12px;letter-spacing:-0.58px;">0.44818(5)</div>
<div class="t" style="left:1211.0px;top:677px;font-size:12px;letter-spacing:-0.58px;">0.72455(5)</div>
<div class="t" style="left:1271.0px;top:677px;font-size:12px;letter-spacing:-0.58px;">0.12939(5)</div>
<div class="t" style="left:1028.0px;top:692px;font-size:12px;letter-spacing:-0.40px;">O1</div>
<div class="t" style="left:1063.0px;top:692px;font-size:12px;letter-spacing:-0.67px;">0</div>
<div class="t" style="left:1087.0px;top:692px;font-size:12px;letter-spacing:-0.34px;">16g</div>
<div class="t" style="left:1125.0px;top:692px;font-size:12px;letter-spacing:-1.67px;">1</div>
<div class="t" style="left:1151.0px;top:692px;font-size:12px;letter-spacing:-0.57px;">0.4039(2)</div>
<div class="t" style="left:1211.0px;top:692px;font-size:12px;letter-spacing:-0.57px;">0.7481(2)</div>
<div class="t" style="left:1271.0px;top:692px;font-size:12px;letter-spacing:-0.57px;">0.3776(6)</div>
<div class="a" style="left:1434px;top:366px;width:17px;height:341px;background:linear-gradient(90deg,#e8e8e8,#f2f2f2 50%,#e8e8e8)"></div>
<svg class="a" style="left:1438px;top:372px" width="9" height="5" viewBox="0 0 9 5"><path d="M1 4.5L4.5 1L8 4.5Z" fill="#404040"/></svg>
<svg class="a" style="left:1438px;top:695px" width="9" height="5" viewBox="0 0 9 5"><path d="M1 0.5L4.5 4L8 0.5Z" fill="#404040"/></svg>
<div class="a" style="left:1435px;top:382px;width:15px;height:278px;border:1px solid #979797;border-radius:2px;background:linear-gradient(90deg,#f0f0f0,#dcdcdc)"></div>
<div class="a" style="left:1438px;top:518px;width:8px;height:7px;border-top:1px solid #555;border-bottom:1px solid #555"></div><div class="a" style="left:1438px;top:521px;width:8px;height:1px;background:#555"></div>
<div class="a" style="left:1009px;top:707px;width:443px;height:5px;background:#e4e4e4"></div>
<div class="a" style="left:8px;top:712px;width:1444px;height:27px;background:#9aa9c2"></div>
<div class="a" style="left:10px;top:713px;width:695px;height:25px;background:linear-gradient(180deg,#d6dce7,#c4cddc);border-radius:3px"></div>
<div class="a" style="left:695px;top:713px;width:10px;height:25px;background:linear-gradient(180deg,#e2e6ee,#d2d8e3);border-radius:0 3px 3px 0"></div>
<div class="a" style="left:707px;top:713px;width:241px;height:25px;background:linear-gradient(180deg,#d6dce7,#c4cddc);border-radius:3px"></div>
<div class="a" style="left:937px;top:713px;width:11px;height:25px;background:linear-gradient(180deg,#e2e6ee,#d2d8e3);border-radius:0 3px 3px 0"></div>
<div class="a" style="left:951px;top:713px;width:108px;height:25px;background:linear-gradient(180deg,#d6dce7,#c4cddc);border-radius:3px"></div>
<div class="a" style="left:1049px;top:713px;width:10px;height:25px;background:linear-gradient(180deg,#e2e6ee,#d2d8e3);border-radius:0 3px 3px 0"></div>
<div class="a" style="left:15px;top:718px;width:2px;height:2px;background:#4a5a78"></div><div class="a" style="left:15px;top:722px;width:2px;height:2px;background:#4a5a78"></div><div class="a" style="left:15px;top:726px;width:2px;height:2px;background:#4a5a78"></div><div class="a" style="left:15px;top:730px;width:2px;height:2px;background:#4a5a78"></div>
<div class="a" style="left:712px;top:718px;width:2px;height:2px;background:#4a5a78"></div><div class="a" style="left:712px;top:722px;width:2px;height:2px;background:#4a5a78"></div><div class="a" style="left:712px;top:726px;width:2px;height:2px;background:#4a5a78"></div><div class="a" style="left:712px;top:730px;width:2px;height:2px;background:#4a5a78"></div>
<div class="a" style="left:955px;top:718px;width:2px;height:2px;background:#4a5a78"></div><div class="a" style="left:955px;top:722px;width:2px;height:2px;background:#4a5a78"></div><div class="a" style="left:955px;top:726px;width:2px;height:2px;background:#4a5a78"></div><div class="a" style="left:955px;top:730px;width:2px;height:2px;background:#4a5a78"></div>
<div class="a" style="left:717px;top:715px;width:20px;height:22px;background:linear-gradient(180deg,#fff8e0,#fde8b0);border:1px solid #e8c880;border-radius:2px"></div>
<svg class="a" style="left:720px;top:718px" width="16" height="16" viewBox="0 0 16 16"><path d="M4 1V14L7 11L10 16L12 15L9 10H13Z" fill="#fff" stroke="#111"/></svg>
<svg class="a" style="left:22px;top:718px" width="16" height="16" viewBox="0 0 16 16"><rect x="1.5" y="1.5" width="13" height="13" fill="#f8f0d8" stroke="#6a7a9a"/><rect x="2" y="2" width="12" height="2" fill="#5d8fe0"/><circle cx="8" cy="9" r="3.5" fill="none" stroke="#e8b820" stroke-width="2" stroke-dasharray="4 1.5"/></svg>
<svg class="a" style="left:44px;top:718px" width="16" height="16" viewBox="0 0 16 16"><rect x="1.5" y="1.5" width="12" height="10" fill="#fff" stroke="#111"/><rect x="2" y="2" width="11" height="2" fill="#111"/><path d="M3 6H9M3 8H8" stroke="#333" stroke-width=".8"/><path d="M8 11H12V9L16 12.5L12 16V14H8Z" fill="#30c8e8" stroke="#1a6a8a" stroke-width=".5"/></svg>
<svg class="a" style="left:65px;top:718px" width="16" height="16" viewBox="0 0 16 16"><circle cx="3" cy="10" r="2.5" fill="#f0e020" stroke="#333" stroke-width=".5"/><circle cx="3" cy="14" r="2" fill="#f0e020" stroke="#333" stroke-width=".5"/><circle cx="7" cy="12" r="2.5" fill="#8a8a20"/><path d="M6 5L15 14" stroke="#1a2040" stroke-width="2"/><path d="M5 4L8 7" stroke="#e8c020" stroke-width="2"/><path d="M12 1V4M10.5 2.5H13.5" stroke="#111" stroke-width=".8"/></svg>
<svg class="a" style="left:88px;top:718px" width="16" height="16" viewBox="0 0 16 16"><rect x="1.5" y="1.5" width="13" height="12" fill="#fff" stroke="#111"/><rect x="2" y="2" width="12" height="2" fill="#1a2a50"/><path d="M2 15L9 8" stroke="#4a2a10" stroke-width="2"/><path d="M6 6L11 4L14 8L10 9Z" fill="#f0c020" stroke="#333" stroke-width=".6"/></svg>
<svg class="a" style="left:127px;top:718px" width="16" height="16" viewBox="0 0 16 16"><path d="M1 9L7 3L15 8L9 14Z" fill="#f0f0c0" stroke="#111" stroke-width="1.2"/><path d="M1 9L5 5L11 10L9 14Z" fill="#111"/><path d="M7 3L15 8L12 11L5 6Z" fill="#e8e080" stroke="#111" stroke-width=".8"/></svg>
<svg class="a" style="left:148px;top:718px" width="16" height="16" viewBox="0 0 16 16"><path d="M1 3H7M4 0V6" stroke="#111" stroke-width="1.5"/><circle cx="12" cy="4" r="3.3" fill="#f0e020" stroke="#222" stroke-width=".7"/><circle cx="5" cy="12" r="3.3" fill="#f0e020" stroke="#222" stroke-width=".7"/><circle cx="12" cy="12" r="3.3" fill="#f0e020" stroke="#222" stroke-width=".7"/></svg>
<svg class="a" style="left:170px;top:718px" width="16" height="16" viewBox="0 0 16 16"><path d="M1 8H8M4.5 4.5V11.5" stroke="#111" stroke-width="1.8"/><circle cx="11.5" cy="8" r="3.8" fill="#f0e020" stroke="#222" stroke-width=".7"/></svg>
<svg class="a" style="left:192px;top:718px" width="16" height="16" viewBox="0 0 16 16"><text x="4" y="9" font-family="Liberation Sans" font-weight="bold" font-size="11" fill="#111">?</text><circle cx="3" cy="13" r="2.3" fill="#fff" stroke="#111"/><circle cx="13" cy="13" r="2.3" fill="#fff" stroke="#111"/><path d="M5.5 13H10.5" stroke="#111"/></svg>
<svg class="a" style="left:214px;top:718px" width="16" height="16" viewBox="0 0 16 16"><rect x="3" y="3" width="10" height="10" fill="none" stroke="#1a3ad0" stroke-width="1.3"/><path d="M3 3L13 13M13 3L3 13" stroke="#1a3ad0" stroke-width="1.2"/><circle cx="3" cy="3" r="2" fill="#fff" stroke="#111"/><circle cx="13" cy="3" r="2" fill="#fff" stroke="#111"/><circle cx="3" cy="13" r="2" fill="#fff" stroke="#111"/><circle cx="13" cy="13" r="2" fill="#fff" stroke="#111"/></svg>
<svg class="a" style="left:236px;top:718px" width="16" height="16" viewBox="0 0 16 16"><path d="M6 1H10V6H13L8 10L3 6H6Z" fill="none" stroke="#999"/><circle cx="4" cy="13" r="2.5" fill="none" stroke="#999"/><circle cx="12" cy="13" r="2.5" fill="none" stroke="#999"/></svg>
<svg class="a" style="left:257px;top:718px" width="16" height="16" viewBox="0 0 16 16"><circle cx="8" cy="8" r="6.5" fill="none" stroke="#222" stroke-dasharray="1 1"/><circle cx="8" cy="8" r="4.3" fill="#8a8020" stroke="#111"/></svg>
<svg class="a" style="left:297px;top:718px" width="16" height="16" viewBox="0 0 16 16"><path d="M4 2H12L15.5 8L12 14H4L0.5 8Z" fill="none" stroke="#1a3ad0" stroke-width="1.8"/></svg>
<svg class="a" style="left:319px;top:718px" width="16" height="16" viewBox="0 0 16 16"><path d="M12 2L15.5 8L12 14" fill="none" stroke="#f0e020" stroke-width="1.8"/><path d="M12 2H4L0.5 8L4 14H12" fill="none" stroke="#1a3ad0" stroke-width="1.8"/></svg>
<svg class="a" style="left:341px;top:718px" width="16" height="16" viewBox="0 0 16 16"><path d="M3 3H11L13 6L11 9H3L1 6Z" fill="#eef" stroke="#556" stroke-width=".9"/><path d="M4 7H12L14 10L12 13H4L2 10Z" fill="#dde" stroke="#1a3ad0" stroke-width="1.1"/><rect x="2" y="8" width="5" height="6" fill="#aab" stroke="#556" stroke-width=".6"/></svg>
<svg class="a" style="left:364px;top:718px" width="16" height="16" viewBox="0 0 16 16"><path d="M1 2L15 14M15 2L1 14M1 8L5 4L11 12L15 8M1 8L5 12L11 4L15 8" stroke="#1a2ad0" stroke-width="1.5" fill="none"/><path d="M5 4L11 12M11 4L5 12" stroke="#111" stroke-width="1.8"/></svg>
<svg class="a" style="left:386px;top:718px" width="16" height="16" viewBox="0 0 16 16"><path d="M1 2L15 14M15 2L1 14M1 8L5 4L11 12L15 8M1 8L5 12L11 4L15 8" stroke="#c03a20" stroke-width="1.5" fill="none"/><path d="M5 4L11 12M11 4L5 12" stroke="#111" stroke-width="1.8"/></svg>
<svg class="a" style="left:413px;top:718px" width="16" height="16" viewBox="0 0 16 16"><path d="M4 12L12 4" stroke="#1a2a60" stroke-width="1.5"/><circle cx="12" cy="4" r="3.3" fill="#f0e020" stroke="#111" stroke-width=".7"/><circle cx="4" cy="12" r="3" fill="#b8d0f0" stroke="#1a2a60" stroke-width=".9"/></svg>
<svg class="a" style="left:434px;top:718px" width="16" height="16" viewBox="0 0 16 16"><path d="M3 3L6 8L3 13M13 3L10 8L13 13M6 8H10" stroke="#1a2ad0" stroke-width="1.6" fill="none"/><path d="M2 3H6M10 3H14M2 13H6M10 13H14" stroke="#111" stroke-width="1.3"/><rect x="1" y="2" width="2" height="2" fill="#f0e020"/><rect x="13" y="2" width="2" height="2" fill="#f0e020"/><rect x="1" y="12" width="2" height="2" fill="#f0e020"/><rect x="13" y="12" width="2" height="2" fill="#f0e020"/></svg>
<svg class="a" style="left:456px;top:718px" width="16" height="16" viewBox="0 0 16 16"><path d="M7 1H12L14 4L12 7H7L5 4Z" fill="none" stroke="#e8d020" stroke-width="1.2"/><path d="M3 9H9L11 12L9 15H3L1 12Z" fill="none" stroke="#111" stroke-width="1.2"/></svg>
<svg class="a" style="left:478px;top:718px" width="16" height="16" viewBox="0 0 16 16"><path d="M7 1H12L14 4L12 7H7L5 4Z" fill="none" stroke="#888" stroke-width="1"/><path d="M3 9H9L11 12L9 15H3L1 12Z" fill="none" stroke="#888" stroke-width="1"/></svg>
<svg class="a" style="left:507px;top:718px" width="16" height="16" viewBox="0 0 16 16"><rect x="1.5" y="4.5" width="10" height="10" fill="none" stroke="#1a2ad0" stroke-width="1.3"/><rect x="4.5" y="1.5" width="10" height="10" fill="none" stroke="#1a2ad0" stroke-width="1.3"/><path d="M1.5 4.5L4.5 1.5M11.5 4.5L14.5 1.5M1.5 14.5L4.5 11.5M11.5 14.5L14.5 11.5" stroke="#1a2ad0"/></svg>
<svg class="a" style="left:529px;top:718px" width="16" height="16" viewBox="0 0 16 16"><path d="M8 1L15 8L8 15L1 8Z M1 8H15M8 1V15M8 1L10 9L8 15" fill="none" stroke="#888" stroke-width=".9"/></svg>
<svg class="a" style="left:551px;top:718px" width="16" height="16" viewBox="0 0 16 16"><path d="M1 5Q8 1 15 5M1 8Q8 4 15 8" stroke="#f0e020" stroke-width="2" fill="none"/><path d="M1 3L15 14M15 3L1 14M1 8H15" stroke="#d02010" stroke-width="2"/><path d="M3 5L13 5" stroke="#222" stroke-width="1"/></svg>
<svg class="a" style="left:583px;top:718px" width="16" height="16" viewBox="0 0 16 16"><circle cx="4" cy="12" r="3" fill="none" stroke="#888"/><path d="M6 10L9 7" stroke="#888"/><text x="8" y="8" font-family="Liberation Sans" font-weight="bold" font-size="8" fill="#888">Fe</text></svg>
<svg class="a" style="left:612px;top:718px" width="16" height="16" viewBox="0 0 16 16"><rect x="0.5" y="0.5" width="15" height="15" fill="#fff" stroke="#1a2ad0"/><path d="M8 2L11 5H9V7H7V5H5ZM8 14L11 11H9V9H7V11H5ZM2 8L5 5V7H7V9H5V11ZM14 8L11 5V7H9V9H11V11Z" fill="#111"/><circle cx="8" cy="8" r="2" fill="#f0e020"/></svg>
<svg class="a" style="left:652px;top:718px" width="16" height="16" viewBox="0 0 16 16"><text x="0" y="14" font-family="Liberation Serif" font-style="italic" font-weight="bold" font-size="16" fill="#1a2ab0">M</text></svg>
<svg class="a" style="left:674px;top:718px" width="16" height="16" viewBox="0 0 16 16"><rect x="0.5" y="0.5" width="15" height="15" fill="#fff" stroke="#1a2ad0"/><circle cx="7" cy="7" r="4" fill="none" stroke="#e03030" stroke-width="1.2"/><circle cx="10" cy="10" r="4" fill="#10a080"/></svg>
<svg class="a" style="left:741px;top:718px" width="16" height="16" viewBox="0 0 16 16"><path d="M8 0L11 4H9V7H12V5L16 8L12 11V9H9V12H11L8 16L5 12H7V9H4V11L0 8L4 5V7H7V4H5Z" fill="#111"/></svg>
<svg class="a" style="left:763px;top:718px" width="16" height="16" viewBox="0 0 16 16"><path d="M13 8A5 5 0 1 1 10 3.5" fill="none" stroke="#111" stroke-width="2.2"/><path d="M8 0L14 3L9 7Z" fill="#111"/></svg>
<svg class="a" style="left:784px;top:718px" width="16" height="16" viewBox="0 0 16 16"><path d="M8 0L12 4H9.5V6.5H12V4L16 8L12 12V9.5H9.5V12H12L8 16L4 12H6.5V9.5H4V12L0 8L4 4V6.5H6.5V4H4Z" fill="#111"/></svg>
<svg class="a" style="left:806px;top:718px" width="16" height="16" viewBox="0 0 16 16"><path d="M1 5V1H5M11 1H15V5M15 11V15H11M5 15H1V11" stroke="#111" stroke-width="1.5" fill="none"/><path d="M3 3L6 6M13 3L10 6M3 13L6 10M13 13L10 10" stroke="#111" stroke-width="1.3"/><rect x="6" y="6" width="4" height="4" fill="none" stroke="#111"/></svg>
<svg class="a" style="left:828px;top:718px" width="16" height="16" viewBox="0 0 16 16"><path d="M15 2L1 8L15 14" stroke="#111" stroke-width="1.8" fill="none"/><path d="M12 5V11" stroke="#111" stroke-width="1.5" stroke-dasharray="1.5 1"/></svg>
<svg class="a" style="left:850px;top:718px" width="16" height="16" viewBox="0 0 16 16"><path d="M8 1L14 7H11V10H5V7H2Z" fill="none" stroke="#111" stroke-width="1.4"/><path d="M2 14H14M5 10L3 14M11 10L13 14" stroke="#111" stroke-width="1.4"/></svg>
<svg class="a" style="left:871px;top:718px" width="16" height="16" viewBox="0 0 16 16"><circle cx="8" cy="8" r="6" fill="none" stroke="#111" stroke-width="1.6" stroke-dasharray="2 1.5"/><circle cx="8" cy="8" r="2.5" fill="#111"/></svg>
<svg class="a" style="left:893px;top:718px" width="16" height="16" viewBox="0 0 16 16"><rect x="1" y="1" width="7" height="7" fill="none" stroke="#999" stroke-width="1.2"/><rect x="4" y="4" width="4" height="4" fill="#999"/><rect x="9" y="8" width="2" height="8" fill="none" stroke="#999"/><rect x="12" y="8" width="2" height="8" fill="none" stroke="#999"/></svg>
<svg class="a" style="left:915px;top:718px" width="16" height="16" viewBox="0 0 16 16"><rect x="1" y="1" width="7" height="7" fill="none" stroke="#999" stroke-width="1.2"/><rect x="4" y="4" width="4" height="4" fill="#999"/><rect x="7" y="7" width="8" height="8" fill="#999"/></svg>
<svg class="a" style="left:961px;top:718px" width="16" height="16" viewBox="0 0 16 16"><path d="M2 1V15H15M5 7V15M8 7V15M11 7V15M14 7V15" stroke="#111" stroke-width="1.3" fill="none"/></svg>
<svg class="a" style="left:983px;top:718px" width="16" height="16" viewBox="0 0 16 16"><path d="M8 1L15 15H1Z" fill="none" stroke="#111" stroke-width="1.3"/></svg>
<svg class="a" style="left:1005px;top:718px" width="16" height="16" viewBox="0 0 16 16"><circle cx="6" cy="11" r="4" fill="none" stroke="#111" stroke-width="1.5"/><path d="M6 7V1M7 7L13 1M9 3H14" stroke="#111" stroke-width="1.5"/></svg>
<svg class="a" style="left:1027px;top:718px" width="16" height="16" viewBox="0 0 16 16"><path d="M1 7L9 2L15 4L7 9Z" fill="#fff" stroke="#111" stroke-width="1.3"/><path d="M1 7V15L7 11L15 7V4" fill="#fff" stroke="#111" stroke-width="1.3"/><path d="M1 15L15 7" stroke="#111" stroke-width="1.1"/></svg>
<div class="a" style="left:119px;top:717px;width:2px;height:19px;border-left:1px solid #8d9ab0;border-right:1px solid #eef1f6"></div>
<div class="a" style="left:291px;top:717px;width:2px;height:19px;border-left:1px solid #8d9ab0;border-right:1px solid #eef1f6"></div>
<div class="a" style="left:406px;top:717px;width:2px;height:19px;border-left:1px solid #8d9ab0;border-right:1px solid #eef1f6"></div>
<div class="a" style="left:500px;top:717px;width:2px;height:19px;border-left:1px solid #8d9ab0;border-right:1px solid #eef1f6"></div>
<div class="a" style="left:609px;top:717px;width:2px;height:19px;border-left:1px solid #8d9ab0;border-right:1px solid #eef1f6"></div>
<div class="a" style="left:645px;top:717px;width:2px;height:19px;border-left:1px solid #8d9ab0;border-right:1px solid #eef1f6"></div>
<svg class="a" style="left:107px;top:726px" width="7" height="4" viewBox="0 0 7 4"><path d="M0 0H7L3.5 4Z" fill="#1d2b4a"/></svg>
<svg class="a" style="left:280px;top:726px" width="7" height="4" viewBox="0 0 7 4"><path d="M0 0H7L3.5 4Z" fill="#1d2b4a"/></svg>
<svg class="a" style="left:572px;top:726px" width="7" height="4" viewBox="0 0 7 4"><path d="M0 0H7L3.5 4Z" fill="#1d2b4a"/></svg>
<svg class="a" style="left:632px;top:726px" width="7" height="4" viewBox="0 0 7 4"><path d="M0 0H7L3.5 4Z" fill="#1d2b4a"/></svg>
<svg class="a" style="left:695px;top:729px" width="9" height="9" viewBox="0 0 9 9"><path d="M1 1H8" stroke="#1d2b4a" stroke-width="1.2"/><path d="M1 4H8L4.5 8Z" fill="#1d2b4a"/></svg>
<svg class="a" style="left:937px;top:729px" width="9" height="9" viewBox="0 0 9 9"><path d="M1 1H8" stroke="#1d2b4a" stroke-width="1.2"/><path d="M1 4H8L4.5 8Z" fill="#1d2b4a"/></svg>
<svg class="a" style="left:1049px;top:729px" width="9" height="9" viewBox="0 0 9 9"><path d="M1 1H8" stroke="#1d2b4a" stroke-width="1.2"/><path d="M1 4H8L4.5 8Z" fill="#1d2b4a"/></svg>
<div class="t" style="left:11.0px;top:745px;font-size:12px;color:#fff;letter-spacing:-0.46px;">For Help, press F1</div>
<div class="a" style="left:793px;top:741px;width:1px;height:17px;background:#dde3ee"></div>
<div class="a" style="left:820px;top:741px;width:1px;height:17px;background:#dde3ee"></div>
<div class="a" style="left:848px;top:741px;width:1px;height:17px;background:#dde3ee"></div>
<div class="a" style="left:876px;top:741px;width:1px;height:17px;background:#dde3ee"></div>
<div class="a" style="left:1048px;top:741px;width:1px;height:17px;background:#dde3ee"></div>
<div class="a" style="left:1093px;top:741px;width:1px;height:17px;background:#dde3ee"></div>
<div class="a" style="left:1163px;top:741px;width:1px;height:17px;background:#dde3ee"></div>
<div class="a" style="left:1234px;top:741px;width:1px;height:17px;background:#dde3ee"></div>
<div class="a" style="left:1305px;top:741px;width:1px;height:17px;background:#dde3ee"></div>
<div class="a" style="left:1369px;top:741px;width:1px;height:17px;background:#dde3ee"></div>
<div class="t" style="left:854.0px;top:745px;font-size:12px;color:#fff;letter-spacing:-0.09px;">Blar</div>
<div class="a" style="left:880px;top:742px;width:101px;height:16px;background:#c2cad6"></div>
<div class="t" style="left:882.0px;top:745px;font-size:12px;letter-spacing:-0.23px;">Manual</div>
<div class="t" style="left:987.0px;top:745px;font-size:12px;color:#fff;letter-spacing:-0.56px;">Y. 0.760757</div>
<div class="t" style="left:1097.0px;top:745px;font-size:12px;color:#fff;letter-spacing:-0.19px;">3 parms</div>
<div class="t" style="left:1168.0px;top:745px;font-size:12px;color:#fff;letter-spacing:-0.17px;">48 atoms</div>
<div class="t" style="left:1240.0px;top:745px;font-size:12px;color:#fff;letter-spacing:-0.05px;">24 bonds</div>
<div class="t" style="left:1311.0px;top:745px;font-size:12px;color:#fff;letter-spacing:0.29px;">polymeric</div>
<div class="t" style="left:1375.0px;top:745px;font-size:12px;color:#fff;">0 polyh.</div>
<div class="a" style="left:1448px;top:755px;width:2px;height:2px;background:#f0f4fa"></div><div class="a" style="left:1444px;top:755px;width:2px;height:2px;background:#f0f4fa"></div><div class="a" style="left:1441px;top:755px;width:2px;height:2px;background:#f0f4fa"></div><div class="a" style="left:1437px;top:755px;width:2px;height:2px;background:#f0f4fa"></div><div class="a" style="left:1448px;top:751px;width:2px;height:2px;background:#f0f4fa"></div><div class="a" style="left:1444px;top:751px;width:2px;height:2px;background:#f0f4fa"></div><div class="a" style="left:1441px;top:751px;width:2px;height:2px;background:#f0f4fa"></div><div class="a" style="left:1448px;top:748px;width:2px;height:2px;background:#f0f4fa"></div><div class="a" style="left:1444px;top:748px;width:2px;height:2px;background:#f0f4fa"></div><div class="a" style="left:1448px;top:744px;width:2px;height:2px;background:#f0f4fa"></div>
<div class="a" style="left:1px;top:759px;width:1458px;height:7px;background:linear-gradient(180deg,#e4eef8 0,#e4eef8 1px,#c4daf0 1px,#c0d8f0 5px,#98e6f8 6px,#98e6f8 7px)"></div><div class="a" style="left:0;top:766px;width:1460px;height:1px;background:#102030"></div>
</body></html>
